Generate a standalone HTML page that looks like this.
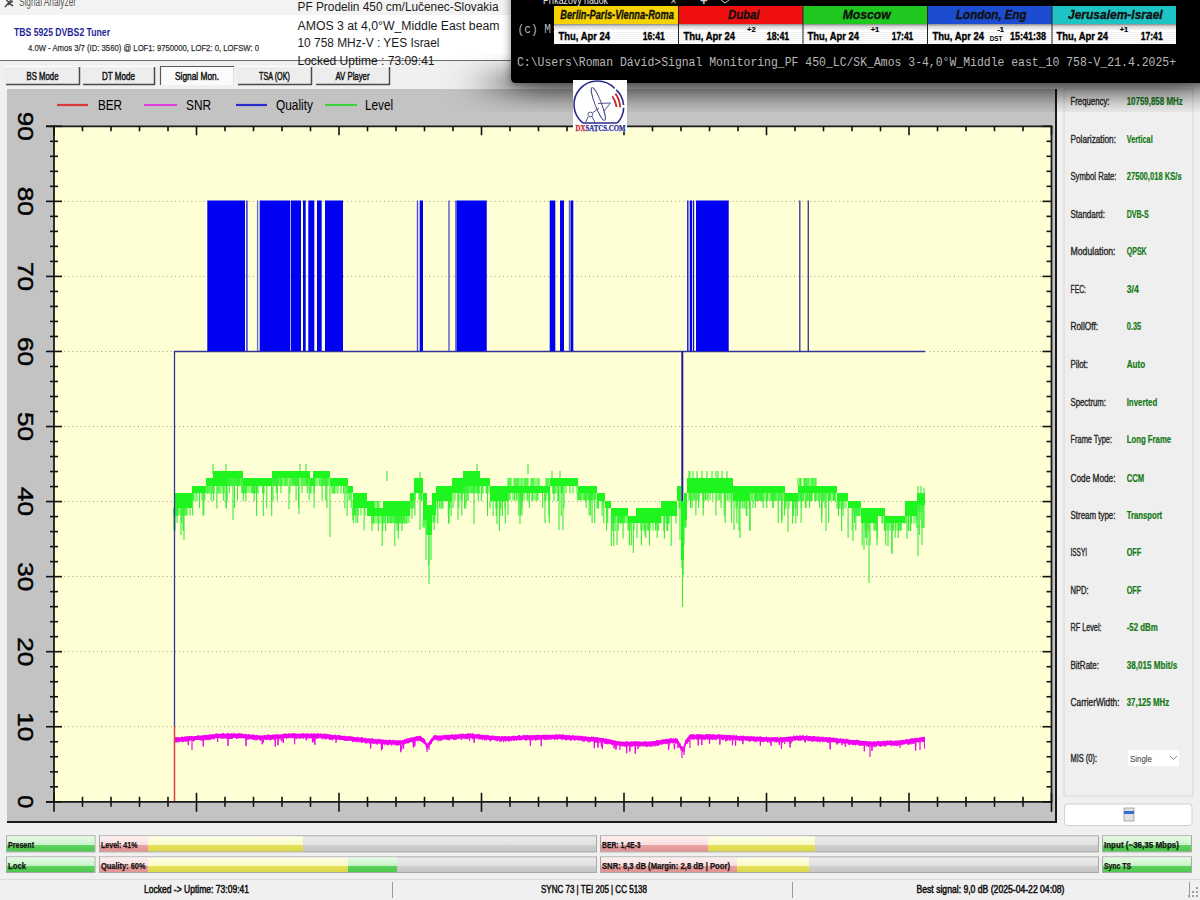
<!DOCTYPE html><html><head><meta charset="utf-8"><style>html,body{margin:0;padding:0;width:1200px;height:900px;overflow:hidden;background:#f0f0f0;font-family:"Liberation Sans",sans-serif}svg{display:block}</style></head><body><svg width="1200" height="900" viewBox="0 0 1200 900"><defs>
<linearGradient id="gGreen" x1="0" y1="0" x2="0" y2="1">
 <stop offset="0" stop-color="#e6fbe6"/><stop offset="0.55" stop-color="#c9f3c9"/><stop offset="0.6" stop-color="#5fd25f"/><stop offset="1" stop-color="#4cc84c"/></linearGradient>
<linearGradient id="gPink" x1="0" y1="0" x2="0" y2="1">
 <stop offset="0" stop-color="#fdf0f0"/><stop offset="0.55" stop-color="#f9dede"/><stop offset="0.6" stop-color="#e9a3a3"/><stop offset="1" stop-color="#e39393"/></linearGradient>
<linearGradient id="gYel" x1="0" y1="0" x2="0" y2="1">
 <stop offset="0" stop-color="#fdfde6"/><stop offset="0.55" stop-color="#fbfbc8"/><stop offset="0.6" stop-color="#e6e15a"/><stop offset="1" stop-color="#dcd84c"/></linearGradient>
<linearGradient id="gGray" x1="0" y1="0" x2="0" y2="1">
 <stop offset="0" stop-color="#ececec"/><stop offset="0.55" stop-color="#e0e0e0"/><stop offset="0.6" stop-color="#cfcfcf"/><stop offset="1" stop-color="#c6c6c6"/></linearGradient>
<linearGradient id="gShadow" x1="0" y1="0" x2="0" y2="1">
 <stop offset="0" stop-color="#000" stop-opacity="0.55"/><stop offset="1" stop-color="#000" stop-opacity="0"/></linearGradient>
<linearGradient id="gShadowL" x1="1" y1="0" x2="0" y2="0">
 <stop offset="0" stop-color="#000" stop-opacity="0.25"/><stop offset="1" stop-color="#000" stop-opacity="0"/></linearGradient>
<linearGradient id="gClock" x1="0" y1="0" x2="0" y2="1">
 <stop offset="0" stop-color="#8a8a8a"/><stop offset="0.35" stop-color="#d8d8d8"/><stop offset="1" stop-color="#ffffff"/></linearGradient>
<linearGradient id="gTabSel" x1="0" y1="0" x2="0" y2="1">
 <stop offset="0" stop-color="#ffffff"/><stop offset="1" stop-color="#f4f4f4"/></linearGradient>
<filter id="blur12" x="-20%" y="-50%" width="140%" height="200%"><feGaussianBlur stdDeviation="10"/></filter>
<filter id="blurS" x="-30%" y="-60%" width="160%" height="220%"><feGaussianBlur stdDeviation="28 11"/></filter>
<filter id="blurA" x="-10%" y="-30%" width="120%" height="160%"><feGaussianBlur stdDeviation="5"/></filter>
<filter id="blur1"><feGaussianBlur stdDeviation="0.6"/></filter>
</defs>
<rect x="0" y="0" width="1200" height="900" fill="#f0f0f0" />
<rect x="0" y="0" width="1200" height="15" fill="#f3f3f3" />
<rect x="0" y="15" width="1200" height="45" fill="#ffffff" />
<line x1="0" y1="60.5" x2="1200" y2="60.5" stroke="#6e6e6e" stroke-width="1.2" />
<text x="19" y="6.3" font-family="Liberation Sans" font-size="12.5" font-weight="normal" font-style="normal" fill="#5a5a5a" text-anchor="start" textLength="57" lengthAdjust="spacingAndGlyphs" >Signal Analyzer</text>
<g stroke="#444" stroke-width="1.4" fill="none"><path d="M5 7 L12 -1 M6 -1 Q9 4 13 6 M8 5 L13 1"/></g>
<text x="14" y="36" font-family="Liberation Sans" font-size="11" font-weight="bold" font-style="normal" fill="#1f1f99" text-anchor="start" textLength="96" lengthAdjust="spacingAndGlyphs" >TBS 5925 DVBS2 Tuner</text>
<text x="28" y="51" font-family="Liberation Sans" font-size="9.5" font-weight="normal" font-style="normal" fill="#333" text-anchor="start" textLength="231" lengthAdjust="spacingAndGlyphs" stroke="#333" stroke-width="0.25" >4.0W - Amos 3/7 (ID: 3560) @ LOF1: 9750000, LOF2: 0, LOFSW: 0</text>
<rect x="5" y="66" width="75" height="19" fill="#ededed" />
<line x1="5" y1="66.5" x2="80" y2="66.5" stroke="#ffffff" stroke-width="1" />
<line x1="6" y1="84.5" x2="80" y2="84.5" stroke="#4a4a4a" stroke-width="1.5" />
<line x1="79.5" y1="67" x2="79.5" y2="85" stroke="#4a4a4a" stroke-width="1.5" />
<text x="42.5" y="79.5" font-family="Liberation Sans" font-size="10.5" font-weight="normal" font-style="normal" fill="#111" text-anchor="middle" textLength="32" lengthAdjust="spacingAndGlyphs" stroke="#111" stroke-width="0.45" >BS Mode</text>
<rect x="82" y="66" width="73" height="19" fill="#ededed" />
<line x1="82" y1="66.5" x2="155" y2="66.5" stroke="#ffffff" stroke-width="1" />
<line x1="83" y1="84.5" x2="155" y2="84.5" stroke="#4a4a4a" stroke-width="1.5" />
<line x1="154.5" y1="67" x2="154.5" y2="85" stroke="#4a4a4a" stroke-width="1.5" />
<text x="118.5" y="79.5" font-family="Liberation Sans" font-size="10.5" font-weight="normal" font-style="normal" fill="#111" text-anchor="middle" textLength="33" lengthAdjust="spacingAndGlyphs" stroke="#111" stroke-width="0.45" >DT Mode</text>
<rect x="160" y="66" width="74" height="19" fill="#fbfbfb" />
<line x1="160.5" y1="66" x2="160.5" y2="85" stroke="#5a5a5a" stroke-width="1.2" />
<line x1="160" y1="66.5" x2="234" y2="66.5" stroke="#5a5a5a" stroke-width="1.2" />
<line x1="233.5" y1="67" x2="233.5" y2="85" stroke="#e0e0e0" stroke-width="1" />
<text x="197.0" y="80" font-family="Liberation Sans" font-size="10.5" font-weight="normal" font-style="normal" fill="#111" text-anchor="middle" textLength="44" lengthAdjust="spacingAndGlyphs" stroke="#111" stroke-width="0.45" >Signal Mon.</text>
<rect x="237" y="66" width="75" height="19" fill="#ededed" />
<line x1="237" y1="66.5" x2="312" y2="66.5" stroke="#ffffff" stroke-width="1" />
<line x1="238" y1="84.5" x2="312" y2="84.5" stroke="#4a4a4a" stroke-width="1.5" />
<line x1="311.5" y1="67" x2="311.5" y2="85" stroke="#4a4a4a" stroke-width="1.5" />
<text x="274.5" y="79.5" font-family="Liberation Sans" font-size="10.5" font-weight="normal" font-style="normal" fill="#111" text-anchor="middle" textLength="31" lengthAdjust="spacingAndGlyphs" stroke="#111" stroke-width="0.45" >TSA (OK)</text>
<rect x="315" y="66" width="75" height="19" fill="#ededed" />
<line x1="315" y1="66.5" x2="390" y2="66.5" stroke="#ffffff" stroke-width="1" />
<line x1="316" y1="84.5" x2="390" y2="84.5" stroke="#4a4a4a" stroke-width="1.5" />
<line x1="389.5" y1="67" x2="389.5" y2="85" stroke="#4a4a4a" stroke-width="1.5" />
<text x="352.5" y="79.5" font-family="Liberation Sans" font-size="10.5" font-weight="normal" font-style="normal" fill="#111" text-anchor="middle" textLength="34" lengthAdjust="spacingAndGlyphs" stroke="#111" stroke-width="0.45" >AV Player</text>
<rect x="7" y="89" width="1050" height="734" fill="#c3c3c3" />
<line x1="1056" y1="89" x2="1056" y2="823" stroke="#1a1a1a" stroke-width="2" />
<line x1="7" y1="822" x2="1057" y2="822" stroke="#1a1a1a" stroke-width="2" />
<rect x="54" y="126.3" width="997.5" height="675.5" fill="#ffffd6" />
<line x1="56" y1="726.7444444444444" x2="1051.5" y2="726.7444444444444" stroke="#9c9c7c" stroke-width="1" stroke-dasharray="1 3.1"/>
<line x1="56" y1="651.6888888888889" x2="1051.5" y2="651.6888888888889" stroke="#9c9c7c" stroke-width="1" stroke-dasharray="1 3.1"/>
<line x1="56" y1="576.6333333333333" x2="1051.5" y2="576.6333333333333" stroke="#9c9c7c" stroke-width="1" stroke-dasharray="1 3.1"/>
<line x1="56" y1="501.5777777777777" x2="1051.5" y2="501.5777777777777" stroke="#9c9c7c" stroke-width="1" stroke-dasharray="1 3.1"/>
<line x1="56" y1="426.5222222222222" x2="1051.5" y2="426.5222222222222" stroke="#9c9c7c" stroke-width="1" stroke-dasharray="1 3.1"/>
<line x1="56" y1="351.46666666666664" x2="1051.5" y2="351.46666666666664" stroke="#9c9c7c" stroke-width="1" stroke-dasharray="1 3.1"/>
<line x1="56" y1="276.41111111111104" x2="1051.5" y2="276.41111111111104" stroke="#9c9c7c" stroke-width="1" stroke-dasharray="1 3.1"/>
<line x1="56" y1="201.3555555555555" x2="1051.5" y2="201.3555555555555" stroke="#9c9c7c" stroke-width="1" stroke-dasharray="1 3.1"/>
<line x1="54" y1="125.3" x2="54" y2="802.8" stroke="#1a1a1a" stroke-width="1.8" />
<line x1="46" y1="801.8" x2="1052.5" y2="801.8" stroke="#1a1a1a" stroke-width="1.8" />
<line x1="46" y1="126.3" x2="1052.5" y2="126.3" stroke="#1a1a1a" stroke-width="1.8" />
<line x1="1051.5" y1="126.3" x2="1051.5" y2="801.8" stroke="#1a1a1a" stroke-width="1.8" />
<line x1="46" y1="801.8" x2="62" y2="801.8" stroke="#111" stroke-width="1.6" />
<line x1="1042.5" y1="801.8" x2="1051.5" y2="801.8" stroke="#111" stroke-width="1.6" />
<line x1="50" y1="786.7888888888889" x2="58" y2="786.7888888888889" stroke="#111" stroke-width="1.6" />
<line x1="1046.5" y1="786.7888888888889" x2="1051.5" y2="786.7888888888889" stroke="#111" stroke-width="1.6" />
<line x1="50" y1="771.7777777777777" x2="58" y2="771.7777777777777" stroke="#111" stroke-width="1.6" />
<line x1="1046.5" y1="771.7777777777777" x2="1051.5" y2="771.7777777777777" stroke="#111" stroke-width="1.6" />
<line x1="50" y1="756.7666666666667" x2="58" y2="756.7666666666667" stroke="#111" stroke-width="1.6" />
<line x1="1046.5" y1="756.7666666666667" x2="1051.5" y2="756.7666666666667" stroke="#111" stroke-width="1.6" />
<line x1="50" y1="741.7555555555555" x2="58" y2="741.7555555555555" stroke="#111" stroke-width="1.6" />
<line x1="1046.5" y1="741.7555555555555" x2="1051.5" y2="741.7555555555555" stroke="#111" stroke-width="1.6" />
<line x1="46" y1="726.7444444444444" x2="62" y2="726.7444444444444" stroke="#111" stroke-width="1.6" />
<line x1="1042.5" y1="726.7444444444444" x2="1051.5" y2="726.7444444444444" stroke="#111" stroke-width="1.6" />
<line x1="50" y1="711.7333333333333" x2="58" y2="711.7333333333333" stroke="#111" stroke-width="1.6" />
<line x1="1046.5" y1="711.7333333333333" x2="1051.5" y2="711.7333333333333" stroke="#111" stroke-width="1.6" />
<line x1="50" y1="696.7222222222222" x2="58" y2="696.7222222222222" stroke="#111" stroke-width="1.6" />
<line x1="1046.5" y1="696.7222222222222" x2="1051.5" y2="696.7222222222222" stroke="#111" stroke-width="1.6" />
<line x1="50" y1="681.7111111111111" x2="58" y2="681.7111111111111" stroke="#111" stroke-width="1.6" />
<line x1="1046.5" y1="681.7111111111111" x2="1051.5" y2="681.7111111111111" stroke="#111" stroke-width="1.6" />
<line x1="50" y1="666.6999999999999" x2="58" y2="666.6999999999999" stroke="#111" stroke-width="1.6" />
<line x1="1046.5" y1="666.6999999999999" x2="1051.5" y2="666.6999999999999" stroke="#111" stroke-width="1.6" />
<line x1="46" y1="651.6888888888889" x2="62" y2="651.6888888888889" stroke="#111" stroke-width="1.6" />
<line x1="1042.5" y1="651.6888888888889" x2="1051.5" y2="651.6888888888889" stroke="#111" stroke-width="1.6" />
<line x1="50" y1="636.6777777777777" x2="58" y2="636.6777777777777" stroke="#111" stroke-width="1.6" />
<line x1="1046.5" y1="636.6777777777777" x2="1051.5" y2="636.6777777777777" stroke="#111" stroke-width="1.6" />
<line x1="50" y1="621.6666666666666" x2="58" y2="621.6666666666666" stroke="#111" stroke-width="1.6" />
<line x1="1046.5" y1="621.6666666666666" x2="1051.5" y2="621.6666666666666" stroke="#111" stroke-width="1.6" />
<line x1="50" y1="606.6555555555556" x2="58" y2="606.6555555555556" stroke="#111" stroke-width="1.6" />
<line x1="1046.5" y1="606.6555555555556" x2="1051.5" y2="606.6555555555556" stroke="#111" stroke-width="1.6" />
<line x1="50" y1="591.6444444444444" x2="58" y2="591.6444444444444" stroke="#111" stroke-width="1.6" />
<line x1="1046.5" y1="591.6444444444444" x2="1051.5" y2="591.6444444444444" stroke="#111" stroke-width="1.6" />
<line x1="46" y1="576.6333333333333" x2="62" y2="576.6333333333333" stroke="#111" stroke-width="1.6" />
<line x1="1042.5" y1="576.6333333333333" x2="1051.5" y2="576.6333333333333" stroke="#111" stroke-width="1.6" />
<line x1="50" y1="561.6222222222221" x2="58" y2="561.6222222222221" stroke="#111" stroke-width="1.6" />
<line x1="1046.5" y1="561.6222222222221" x2="1051.5" y2="561.6222222222221" stroke="#111" stroke-width="1.6" />
<line x1="50" y1="546.6111111111111" x2="58" y2="546.6111111111111" stroke="#111" stroke-width="1.6" />
<line x1="1046.5" y1="546.6111111111111" x2="1051.5" y2="546.6111111111111" stroke="#111" stroke-width="1.6" />
<line x1="50" y1="531.5999999999999" x2="58" y2="531.5999999999999" stroke="#111" stroke-width="1.6" />
<line x1="1046.5" y1="531.5999999999999" x2="1051.5" y2="531.5999999999999" stroke="#111" stroke-width="1.6" />
<line x1="50" y1="516.5888888888888" x2="58" y2="516.5888888888888" stroke="#111" stroke-width="1.6" />
<line x1="1046.5" y1="516.5888888888888" x2="1051.5" y2="516.5888888888888" stroke="#111" stroke-width="1.6" />
<line x1="46" y1="501.5777777777777" x2="62" y2="501.5777777777777" stroke="#111" stroke-width="1.6" />
<line x1="1042.5" y1="501.5777777777777" x2="1051.5" y2="501.5777777777777" stroke="#111" stroke-width="1.6" />
<line x1="50" y1="486.5666666666666" x2="58" y2="486.5666666666666" stroke="#111" stroke-width="1.6" />
<line x1="1046.5" y1="486.5666666666666" x2="1051.5" y2="486.5666666666666" stroke="#111" stroke-width="1.6" />
<line x1="50" y1="471.5555555555555" x2="58" y2="471.5555555555555" stroke="#111" stroke-width="1.6" />
<line x1="1046.5" y1="471.5555555555555" x2="1051.5" y2="471.5555555555555" stroke="#111" stroke-width="1.6" />
<line x1="50" y1="456.5444444444444" x2="58" y2="456.5444444444444" stroke="#111" stroke-width="1.6" />
<line x1="1046.5" y1="456.5444444444444" x2="1051.5" y2="456.5444444444444" stroke="#111" stroke-width="1.6" />
<line x1="50" y1="441.5333333333333" x2="58" y2="441.5333333333333" stroke="#111" stroke-width="1.6" />
<line x1="1046.5" y1="441.5333333333333" x2="1051.5" y2="441.5333333333333" stroke="#111" stroke-width="1.6" />
<line x1="46" y1="426.5222222222222" x2="62" y2="426.5222222222222" stroke="#111" stroke-width="1.6" />
<line x1="1042.5" y1="426.5222222222222" x2="1051.5" y2="426.5222222222222" stroke="#111" stroke-width="1.6" />
<line x1="50" y1="411.51111111111106" x2="58" y2="411.51111111111106" stroke="#111" stroke-width="1.6" />
<line x1="1046.5" y1="411.51111111111106" x2="1051.5" y2="411.51111111111106" stroke="#111" stroke-width="1.6" />
<line x1="50" y1="396.49999999999994" x2="58" y2="396.49999999999994" stroke="#111" stroke-width="1.6" />
<line x1="1046.5" y1="396.49999999999994" x2="1051.5" y2="396.49999999999994" stroke="#111" stroke-width="1.6" />
<line x1="50" y1="381.4888888888888" x2="58" y2="381.4888888888888" stroke="#111" stroke-width="1.6" />
<line x1="1046.5" y1="381.4888888888888" x2="1051.5" y2="381.4888888888888" stroke="#111" stroke-width="1.6" />
<line x1="50" y1="366.47777777777776" x2="58" y2="366.47777777777776" stroke="#111" stroke-width="1.6" />
<line x1="1046.5" y1="366.47777777777776" x2="1051.5" y2="366.47777777777776" stroke="#111" stroke-width="1.6" />
<line x1="46" y1="351.46666666666664" x2="62" y2="351.46666666666664" stroke="#111" stroke-width="1.6" />
<line x1="1042.5" y1="351.46666666666664" x2="1051.5" y2="351.46666666666664" stroke="#111" stroke-width="1.6" />
<line x1="50" y1="336.4555555555555" x2="58" y2="336.4555555555555" stroke="#111" stroke-width="1.6" />
<line x1="1046.5" y1="336.4555555555555" x2="1051.5" y2="336.4555555555555" stroke="#111" stroke-width="1.6" />
<line x1="50" y1="321.4444444444444" x2="58" y2="321.4444444444444" stroke="#111" stroke-width="1.6" />
<line x1="1046.5" y1="321.4444444444444" x2="1051.5" y2="321.4444444444444" stroke="#111" stroke-width="1.6" />
<line x1="50" y1="306.4333333333333" x2="58" y2="306.4333333333333" stroke="#111" stroke-width="1.6" />
<line x1="1046.5" y1="306.4333333333333" x2="1051.5" y2="306.4333333333333" stroke="#111" stroke-width="1.6" />
<line x1="50" y1="291.42222222222216" x2="58" y2="291.42222222222216" stroke="#111" stroke-width="1.6" />
<line x1="1046.5" y1="291.42222222222216" x2="1051.5" y2="291.42222222222216" stroke="#111" stroke-width="1.6" />
<line x1="46" y1="276.41111111111104" x2="62" y2="276.41111111111104" stroke="#111" stroke-width="1.6" />
<line x1="1042.5" y1="276.41111111111104" x2="1051.5" y2="276.41111111111104" stroke="#111" stroke-width="1.6" />
<line x1="50" y1="261.4" x2="58" y2="261.4" stroke="#111" stroke-width="1.6" />
<line x1="1046.5" y1="261.4" x2="1051.5" y2="261.4" stroke="#111" stroke-width="1.6" />
<line x1="50" y1="246.3888888888888" x2="58" y2="246.3888888888888" stroke="#111" stroke-width="1.6" />
<line x1="1046.5" y1="246.3888888888888" x2="1051.5" y2="246.3888888888888" stroke="#111" stroke-width="1.6" />
<line x1="50" y1="231.37777777777774" x2="58" y2="231.37777777777774" stroke="#111" stroke-width="1.6" />
<line x1="1046.5" y1="231.37777777777774" x2="1051.5" y2="231.37777777777774" stroke="#111" stroke-width="1.6" />
<line x1="50" y1="216.36666666666667" x2="58" y2="216.36666666666667" stroke="#111" stroke-width="1.6" />
<line x1="1046.5" y1="216.36666666666667" x2="1051.5" y2="216.36666666666667" stroke="#111" stroke-width="1.6" />
<line x1="46" y1="201.3555555555555" x2="62" y2="201.3555555555555" stroke="#111" stroke-width="1.6" />
<line x1="1042.5" y1="201.3555555555555" x2="1051.5" y2="201.3555555555555" stroke="#111" stroke-width="1.6" />
<line x1="50" y1="186.34444444444443" x2="58" y2="186.34444444444443" stroke="#111" stroke-width="1.6" />
<line x1="1046.5" y1="186.34444444444443" x2="1051.5" y2="186.34444444444443" stroke="#111" stroke-width="1.6" />
<line x1="50" y1="171.33333333333326" x2="58" y2="171.33333333333326" stroke="#111" stroke-width="1.6" />
<line x1="1046.5" y1="171.33333333333326" x2="1051.5" y2="171.33333333333326" stroke="#111" stroke-width="1.6" />
<line x1="50" y1="156.3222222222222" x2="58" y2="156.3222222222222" stroke="#111" stroke-width="1.6" />
<line x1="1046.5" y1="156.3222222222222" x2="1051.5" y2="156.3222222222222" stroke="#111" stroke-width="1.6" />
<line x1="50" y1="141.31111111111102" x2="58" y2="141.31111111111102" stroke="#111" stroke-width="1.6" />
<line x1="1046.5" y1="141.31111111111102" x2="1051.5" y2="141.31111111111102" stroke="#111" stroke-width="1.6" />
<line x1="46" y1="126.29999999999995" x2="62" y2="126.29999999999995" stroke="#111" stroke-width="1.6" />
<line x1="1042.5" y1="126.29999999999995" x2="1051.5" y2="126.29999999999995" stroke="#111" stroke-width="1.6" />
<line x1="54.0" y1="792.8" x2="54.0" y2="811.8" stroke="#111" stroke-width="1.6" />
<line x1="54.0" y1="126.3" x2="54.0" y2="135.3" stroke="#111" stroke-width="1.6" />
<line x1="82.5" y1="796.8" x2="82.5" y2="806.8" stroke="#111" stroke-width="1.6" />
<line x1="82.5" y1="126.3" x2="82.5" y2="131.3" stroke="#111" stroke-width="1.6" />
<line x1="111.0" y1="796.8" x2="111.0" y2="806.8" stroke="#111" stroke-width="1.6" />
<line x1="111.0" y1="126.3" x2="111.0" y2="131.3" stroke="#111" stroke-width="1.6" />
<line x1="139.5" y1="796.8" x2="139.5" y2="806.8" stroke="#111" stroke-width="1.6" />
<line x1="139.5" y1="126.3" x2="139.5" y2="131.3" stroke="#111" stroke-width="1.6" />
<line x1="168.0" y1="796.8" x2="168.0" y2="806.8" stroke="#111" stroke-width="1.6" />
<line x1="168.0" y1="126.3" x2="168.0" y2="131.3" stroke="#111" stroke-width="1.6" />
<line x1="196.5" y1="792.8" x2="196.5" y2="811.8" stroke="#111" stroke-width="1.6" />
<line x1="196.5" y1="126.3" x2="196.5" y2="135.3" stroke="#111" stroke-width="1.6" />
<line x1="225.0" y1="796.8" x2="225.0" y2="806.8" stroke="#111" stroke-width="1.6" />
<line x1="225.0" y1="126.3" x2="225.0" y2="131.3" stroke="#111" stroke-width="1.6" />
<line x1="253.5" y1="796.8" x2="253.5" y2="806.8" stroke="#111" stroke-width="1.6" />
<line x1="253.5" y1="126.3" x2="253.5" y2="131.3" stroke="#111" stroke-width="1.6" />
<line x1="282.0" y1="796.8" x2="282.0" y2="806.8" stroke="#111" stroke-width="1.6" />
<line x1="282.0" y1="126.3" x2="282.0" y2="131.3" stroke="#111" stroke-width="1.6" />
<line x1="310.5" y1="796.8" x2="310.5" y2="806.8" stroke="#111" stroke-width="1.6" />
<line x1="310.5" y1="126.3" x2="310.5" y2="131.3" stroke="#111" stroke-width="1.6" />
<line x1="339.0" y1="792.8" x2="339.0" y2="811.8" stroke="#111" stroke-width="1.6" />
<line x1="339.0" y1="126.3" x2="339.0" y2="135.3" stroke="#111" stroke-width="1.6" />
<line x1="367.5" y1="796.8" x2="367.5" y2="806.8" stroke="#111" stroke-width="1.6" />
<line x1="367.5" y1="126.3" x2="367.5" y2="131.3" stroke="#111" stroke-width="1.6" />
<line x1="396.0" y1="796.8" x2="396.0" y2="806.8" stroke="#111" stroke-width="1.6" />
<line x1="396.0" y1="126.3" x2="396.0" y2="131.3" stroke="#111" stroke-width="1.6" />
<line x1="424.5" y1="796.8" x2="424.5" y2="806.8" stroke="#111" stroke-width="1.6" />
<line x1="424.5" y1="126.3" x2="424.5" y2="131.3" stroke="#111" stroke-width="1.6" />
<line x1="453.0" y1="796.8" x2="453.0" y2="806.8" stroke="#111" stroke-width="1.6" />
<line x1="453.0" y1="126.3" x2="453.0" y2="131.3" stroke="#111" stroke-width="1.6" />
<line x1="481.5" y1="792.8" x2="481.5" y2="811.8" stroke="#111" stroke-width="1.6" />
<line x1="481.5" y1="126.3" x2="481.5" y2="135.3" stroke="#111" stroke-width="1.6" />
<line x1="510.0" y1="796.8" x2="510.0" y2="806.8" stroke="#111" stroke-width="1.6" />
<line x1="510.0" y1="126.3" x2="510.0" y2="131.3" stroke="#111" stroke-width="1.6" />
<line x1="538.5" y1="796.8" x2="538.5" y2="806.8" stroke="#111" stroke-width="1.6" />
<line x1="538.5" y1="126.3" x2="538.5" y2="131.3" stroke="#111" stroke-width="1.6" />
<line x1="567.0" y1="796.8" x2="567.0" y2="806.8" stroke="#111" stroke-width="1.6" />
<line x1="567.0" y1="126.3" x2="567.0" y2="131.3" stroke="#111" stroke-width="1.6" />
<line x1="595.5" y1="796.8" x2="595.5" y2="806.8" stroke="#111" stroke-width="1.6" />
<line x1="595.5" y1="126.3" x2="595.5" y2="131.3" stroke="#111" stroke-width="1.6" />
<line x1="624.0" y1="792.8" x2="624.0" y2="811.8" stroke="#111" stroke-width="1.6" />
<line x1="624.0" y1="126.3" x2="624.0" y2="135.3" stroke="#111" stroke-width="1.6" />
<line x1="652.5" y1="796.8" x2="652.5" y2="806.8" stroke="#111" stroke-width="1.6" />
<line x1="652.5" y1="126.3" x2="652.5" y2="131.3" stroke="#111" stroke-width="1.6" />
<line x1="681.0" y1="796.8" x2="681.0" y2="806.8" stroke="#111" stroke-width="1.6" />
<line x1="681.0" y1="126.3" x2="681.0" y2="131.3" stroke="#111" stroke-width="1.6" />
<line x1="709.5" y1="796.8" x2="709.5" y2="806.8" stroke="#111" stroke-width="1.6" />
<line x1="709.5" y1="126.3" x2="709.5" y2="131.3" stroke="#111" stroke-width="1.6" />
<line x1="738.0" y1="796.8" x2="738.0" y2="806.8" stroke="#111" stroke-width="1.6" />
<line x1="738.0" y1="126.3" x2="738.0" y2="131.3" stroke="#111" stroke-width="1.6" />
<line x1="766.5" y1="792.8" x2="766.5" y2="811.8" stroke="#111" stroke-width="1.6" />
<line x1="766.5" y1="126.3" x2="766.5" y2="135.3" stroke="#111" stroke-width="1.6" />
<line x1="795.0" y1="796.8" x2="795.0" y2="806.8" stroke="#111" stroke-width="1.6" />
<line x1="795.0" y1="126.3" x2="795.0" y2="131.3" stroke="#111" stroke-width="1.6" />
<line x1="823.5" y1="796.8" x2="823.5" y2="806.8" stroke="#111" stroke-width="1.6" />
<line x1="823.5" y1="126.3" x2="823.5" y2="131.3" stroke="#111" stroke-width="1.6" />
<line x1="852.0" y1="796.8" x2="852.0" y2="806.8" stroke="#111" stroke-width="1.6" />
<line x1="852.0" y1="126.3" x2="852.0" y2="131.3" stroke="#111" stroke-width="1.6" />
<line x1="880.5" y1="796.8" x2="880.5" y2="806.8" stroke="#111" stroke-width="1.6" />
<line x1="880.5" y1="126.3" x2="880.5" y2="131.3" stroke="#111" stroke-width="1.6" />
<line x1="909.0" y1="792.8" x2="909.0" y2="811.8" stroke="#111" stroke-width="1.6" />
<line x1="909.0" y1="126.3" x2="909.0" y2="135.3" stroke="#111" stroke-width="1.6" />
<line x1="937.5" y1="796.8" x2="937.5" y2="806.8" stroke="#111" stroke-width="1.6" />
<line x1="937.5" y1="126.3" x2="937.5" y2="131.3" stroke="#111" stroke-width="1.6" />
<line x1="966.0" y1="796.8" x2="966.0" y2="806.8" stroke="#111" stroke-width="1.6" />
<line x1="966.0" y1="126.3" x2="966.0" y2="131.3" stroke="#111" stroke-width="1.6" />
<line x1="994.5" y1="796.8" x2="994.5" y2="806.8" stroke="#111" stroke-width="1.6" />
<line x1="994.5" y1="126.3" x2="994.5" y2="131.3" stroke="#111" stroke-width="1.6" />
<line x1="1023.0" y1="796.8" x2="1023.0" y2="806.8" stroke="#111" stroke-width="1.6" />
<line x1="1023.0" y1="126.3" x2="1023.0" y2="131.3" stroke="#111" stroke-width="1.6" />
<line x1="1051.5" y1="792.8" x2="1051.5" y2="811.8" stroke="#111" stroke-width="1.6" />
<line x1="1051.5" y1="126.3" x2="1051.5" y2="135.3" stroke="#111" stroke-width="1.6" />
<text transform="translate(18,801.8) rotate(90)" x="0" y="0" font-family="Liberation Sans" font-size="22" fill="#000" stroke="#000" stroke-width="0.45" text-anchor="middle" textLength="13" lengthAdjust="spacingAndGlyphs" dy="0">0</text>
<text transform="translate(18,726.7444444444444) rotate(90)" x="0" y="0" font-family="Liberation Sans" font-size="22" fill="#000" stroke="#000" stroke-width="0.45" text-anchor="middle" textLength="29" lengthAdjust="spacingAndGlyphs" dy="0">10</text>
<text transform="translate(18,651.6888888888889) rotate(90)" x="0" y="0" font-family="Liberation Sans" font-size="22" fill="#000" stroke="#000" stroke-width="0.45" text-anchor="middle" textLength="29" lengthAdjust="spacingAndGlyphs" dy="0">20</text>
<text transform="translate(18,576.6333333333333) rotate(90)" x="0" y="0" font-family="Liberation Sans" font-size="22" fill="#000" stroke="#000" stroke-width="0.45" text-anchor="middle" textLength="29" lengthAdjust="spacingAndGlyphs" dy="0">30</text>
<text transform="translate(18,501.5777777777777) rotate(90)" x="0" y="0" font-family="Liberation Sans" font-size="22" fill="#000" stroke="#000" stroke-width="0.45" text-anchor="middle" textLength="29" lengthAdjust="spacingAndGlyphs" dy="0">40</text>
<text transform="translate(18,426.5222222222222) rotate(90)" x="0" y="0" font-family="Liberation Sans" font-size="22" fill="#000" stroke="#000" stroke-width="0.45" text-anchor="middle" textLength="29" lengthAdjust="spacingAndGlyphs" dy="0">50</text>
<text transform="translate(18,351.46666666666664) rotate(90)" x="0" y="0" font-family="Liberation Sans" font-size="22" fill="#000" stroke="#000" stroke-width="0.45" text-anchor="middle" textLength="29" lengthAdjust="spacingAndGlyphs" dy="0">60</text>
<text transform="translate(18,276.41111111111104) rotate(90)" x="0" y="0" font-family="Liberation Sans" font-size="22" fill="#000" stroke="#000" stroke-width="0.45" text-anchor="middle" textLength="29" lengthAdjust="spacingAndGlyphs" dy="0">70</text>
<text transform="translate(18,201.3555555555555) rotate(90)" x="0" y="0" font-family="Liberation Sans" font-size="22" fill="#000" stroke="#000" stroke-width="0.45" text-anchor="middle" textLength="29" lengthAdjust="spacingAndGlyphs" dy="0">80</text>
<text transform="translate(18,126.29999999999995) rotate(90)" x="0" y="0" font-family="Liberation Sans" font-size="22" fill="#000" stroke="#000" stroke-width="0.45" text-anchor="middle" textLength="29" lengthAdjust="spacingAndGlyphs" dy="0">90</text>
<line x1="57" y1="105" x2="88" y2="105" stroke="#d83a3a" stroke-width="2.2" />
<text x="98" y="110" font-family="Liberation Sans" font-size="14.5" font-weight="normal" font-style="normal" fill="#000" text-anchor="start" textLength="24" lengthAdjust="spacingAndGlyphs" >BER</text>
<line x1="144" y1="105" x2="177" y2="105" stroke="#e040e0" stroke-width="2.2" />
<text x="186" y="110" font-family="Liberation Sans" font-size="14.5" font-weight="normal" font-style="normal" fill="#000" text-anchor="start" textLength="25" lengthAdjust="spacingAndGlyphs" >SNR</text>
<line x1="236" y1="105" x2="267" y2="105" stroke="#2a2ad0" stroke-width="2.2" />
<text x="276" y="110" font-family="Liberation Sans" font-size="14.5" font-weight="normal" font-style="normal" fill="#000" text-anchor="start" textLength="37" lengthAdjust="spacingAndGlyphs" >Quality</text>
<line x1="325" y1="105" x2="357" y2="105" stroke="#3cd23c" stroke-width="2.2" />
<text x="365" y="110" font-family="Liberation Sans" font-size="14.5" font-weight="normal" font-style="normal" fill="#000" text-anchor="start" textLength="28" lengthAdjust="spacingAndGlyphs" >Level</text>
<rect x="174" y="493" width="18" height="15" fill="#1ef51e" />
<rect x="192" y="486" width="14" height="7" fill="#1ef51e" />
<rect x="206" y="478" width="7" height="8" fill="#1ef51e" />
<rect x="213" y="471" width="15" height="15" fill="#1ef51e" />
<rect x="228" y="471" width="15" height="7" fill="#1ef51e" />
<rect x="243" y="478" width="15" height="8" fill="#1ef51e" />
<rect x="258" y="478" width="14" height="8" fill="#1ef51e" />
<rect x="272" y="471" width="38" height="7" fill="#1ef51e" />
<rect x="310" y="478" width="3" height="8" fill="#1ef51e" />
<rect x="313" y="471" width="17" height="7" fill="#1ef51e" />
<rect x="330" y="478" width="18" height="8" fill="#1ef51e" />
<rect x="348" y="486" width="5" height="7" fill="#1ef51e" />
<rect x="353" y="493" width="14" height="15" fill="#1ef51e" />
<rect x="367" y="501" width="7" height="15" fill="#1ef51e" />
<rect x="374" y="508" width="9" height="8" fill="#1ef51e" />
<rect x="383" y="501" width="27" height="15" fill="#1ef51e" />
<rect x="410" y="493" width="4" height="8" fill="#1ef51e" />
<rect x="414" y="478" width="9" height="15" fill="#1ef51e" />
<rect x="423" y="493" width="4" height="27" fill="#1ef51e" />
<rect x="427" y="505" width="5" height="30" fill="#1ef51e" />
<rect x="432" y="493" width="4" height="22" fill="#1ef51e" />
<rect x="436" y="486" width="16" height="15" fill="#1ef51e" />
<rect x="452" y="478" width="11" height="15" fill="#1ef51e" />
<rect x="463" y="471" width="17" height="15" fill="#1ef51e" />
<rect x="480" y="478" width="10" height="8" fill="#1ef51e" />
<rect x="490" y="486" width="18" height="15" fill="#1ef51e" />
<rect x="508" y="486" width="42" height="7" fill="#1ef51e" />
<rect x="550" y="478" width="28" height="8" fill="#1ef51e" />
<rect x="578" y="486" width="19" height="7" fill="#1ef51e" />
<rect x="597" y="493" width="8" height="8" fill="#1ef51e" />
<rect x="605" y="501" width="6" height="7" fill="#1ef51e" />
<rect x="611" y="508" width="17" height="8" fill="#1ef51e" />
<rect x="628" y="516" width="8" height="7" fill="#1ef51e" />
<rect x="636" y="508" width="25" height="15" fill="#1ef51e" />
<rect x="661" y="501" width="16" height="15" fill="#1ef51e" />
<rect x="677" y="486" width="4" height="15" fill="#1ef51e" />
<rect x="681" y="501" width="3" height="59" fill="#1ef51e" />
<rect x="684" y="493" width="3" height="27" fill="#1ef51e" />
<rect x="687" y="478" width="46" height="15" fill="#1ef51e" />
<rect x="733" y="486" width="17" height="15" fill="#1ef51e" />
<rect x="750" y="486" width="35" height="7" fill="#1ef51e" />
<rect x="785" y="493" width="13" height="8" fill="#1ef51e" />
<rect x="798" y="486" width="39" height="7" fill="#1ef51e" />
<rect x="837" y="493" width="11" height="8" fill="#1ef51e" />
<rect x="848" y="501" width="13" height="7" fill="#1ef51e" />
<rect x="861" y="508" width="16" height="15" fill="#1ef51e" />
<rect x="877" y="508" width="8" height="8" fill="#1ef51e" />
<rect x="885" y="516" width="20" height="7" fill="#1ef51e" />
<rect x="905" y="501" width="12" height="15" fill="#1ef51e" />
<rect x="917" y="493" width="8" height="12" fill="#1ef51e" />
<g stroke="#1ef51e" stroke-width="1"><line x1="228.0" y1="478" x2="228.0" y2="486"/><line x1="229.0" y1="478" x2="229.0" y2="486"/><line x1="230.0" y1="478" x2="230.0" y2="486"/><line x1="231.0" y1="478" x2="231.0" y2="486"/><line x1="232.0" y1="478" x2="232.0" y2="486"/><line x1="233.0" y1="478" x2="233.0" y2="486"/><line x1="234.0" y1="478" x2="234.0" y2="486"/><line x1="235.0" y1="478" x2="235.0" y2="486"/><line x1="236.0" y1="478" x2="236.0" y2="486"/><line x1="237.0" y1="478" x2="237.0" y2="486"/><line x1="238.0" y1="478" x2="238.0" y2="486"/><line x1="239.0" y1="478" x2="239.0" y2="486"/><line x1="240.0" y1="478" x2="240.0" y2="486"/><line x1="242.0" y1="478" x2="242.0" y2="486"/><line x1="243.0" y1="486" x2="243.0" y2="493"/><line x1="244.0" y1="486" x2="244.0" y2="493"/><line x1="246.0" y1="486" x2="246.0" y2="493"/><line x1="247.0" y1="486" x2="247.0" y2="493"/><line x1="249.0" y1="486" x2="249.0" y2="493"/><line x1="251.0" y1="486" x2="251.0" y2="493"/><line x1="252.0" y1="486" x2="252.0" y2="493"/><line x1="253.0" y1="486" x2="253.0" y2="493"/><line x1="254.0" y1="486" x2="254.0" y2="493"/><line x1="256.0" y1="486" x2="256.0" y2="493"/><line x1="257.0" y1="486" x2="257.0" y2="493"/><line x1="272.0" y1="478" x2="272.0" y2="486"/><line x1="273.0" y1="478" x2="273.0" y2="486"/><line x1="274.0" y1="478" x2="274.0" y2="486"/><line x1="275.0" y1="478" x2="275.0" y2="486"/><line x1="276.0" y1="478" x2="276.0" y2="486"/><line x1="277.0" y1="478" x2="277.0" y2="486"/><line x1="278.0" y1="478" x2="278.0" y2="486"/><line x1="279.0" y1="478" x2="279.0" y2="486"/><line x1="280.0" y1="478" x2="280.0" y2="486"/><line x1="281.0" y1="478" x2="281.0" y2="486"/><line x1="282.0" y1="478" x2="282.0" y2="486"/><line x1="283.0" y1="478" x2="283.0" y2="486"/><line x1="285.0" y1="478" x2="285.0" y2="486"/><line x1="286.0" y1="478" x2="286.0" y2="486"/><line x1="287.0" y1="478" x2="287.0" y2="486"/><line x1="288.0" y1="478" x2="288.0" y2="486"/><line x1="291.0" y1="478" x2="291.0" y2="486"/><line x1="293.0" y1="478" x2="293.0" y2="486"/><line x1="294.0" y1="478" x2="294.0" y2="486"/><line x1="296.0" y1="478" x2="296.0" y2="486"/><line x1="297.0" y1="478" x2="297.0" y2="486"/><line x1="298.0" y1="478" x2="298.0" y2="486"/><line x1="299.0" y1="478" x2="299.0" y2="486"/><line x1="301.0" y1="478" x2="301.0" y2="486"/><line x1="303.0" y1="478" x2="303.0" y2="486"/><line x1="304.0" y1="478" x2="304.0" y2="486"/><line x1="305.0" y1="478" x2="305.0" y2="486"/><line x1="306.0" y1="478" x2="306.0" y2="486"/><line x1="307.0" y1="478" x2="307.0" y2="486"/><line x1="313.0" y1="478" x2="313.0" y2="486"/><line x1="314.0" y1="478" x2="314.0" y2="486"/><line x1="315.0" y1="478" x2="315.0" y2="486"/><line x1="317.0" y1="478" x2="317.0" y2="486"/><line x1="320.0" y1="478" x2="320.0" y2="486"/><line x1="321.0" y1="478" x2="321.0" y2="486"/><line x1="322.0" y1="478" x2="322.0" y2="486"/><line x1="323.0" y1="478" x2="323.0" y2="486"/><line x1="324.0" y1="478" x2="324.0" y2="486"/><line x1="325.0" y1="478" x2="325.0" y2="486"/><line x1="326.0" y1="478" x2="326.0" y2="486"/><line x1="327.0" y1="478" x2="327.0" y2="486"/><line x1="329.0" y1="478" x2="329.0" y2="486"/><line x1="374.0" y1="501" x2="374.0" y2="508"/><line x1="375.0" y1="501" x2="375.0" y2="508"/><line x1="377.0" y1="501" x2="377.0" y2="508"/><line x1="378.0" y1="501" x2="378.0" y2="508"/><line x1="379.0" y1="501" x2="379.0" y2="508"/><line x1="383.0" y1="516" x2="383.0" y2="523"/><line x1="384.0" y1="516" x2="384.0" y2="523"/><line x1="385.0" y1="516" x2="385.0" y2="523"/><line x1="388.0" y1="516" x2="388.0" y2="523"/><line x1="389.0" y1="516" x2="389.0" y2="523"/><line x1="390.0" y1="516" x2="390.0" y2="523"/><line x1="391.0" y1="516" x2="391.0" y2="523"/><line x1="392.0" y1="516" x2="392.0" y2="523"/><line x1="393.0" y1="516" x2="393.0" y2="523"/><line x1="394.0" y1="516" x2="394.0" y2="523"/><line x1="395.0" y1="516" x2="395.0" y2="523"/><line x1="396.0" y1="516" x2="396.0" y2="523"/><line x1="397.0" y1="516" x2="397.0" y2="523"/><line x1="398.0" y1="516" x2="398.0" y2="523"/><line x1="400.0" y1="516" x2="400.0" y2="523"/><line x1="401.0" y1="516" x2="401.0" y2="523"/><line x1="402.0" y1="516" x2="402.0" y2="523"/><line x1="403.0" y1="516" x2="403.0" y2="523"/><line x1="404.0" y1="516" x2="404.0" y2="523"/><line x1="409.0" y1="516" x2="409.0" y2="523"/><line x1="463.0" y1="486" x2="463.0" y2="493"/><line x1="464.0" y1="486" x2="464.0" y2="493"/><line x1="465.0" y1="486" x2="465.0" y2="493"/><line x1="466.0" y1="486" x2="466.0" y2="493"/><line x1="467.0" y1="486" x2="467.0" y2="493"/><line x1="468.0" y1="486" x2="468.0" y2="493"/><line x1="469.0" y1="486" x2="469.0" y2="493"/><line x1="470.0" y1="486" x2="470.0" y2="493"/><line x1="471.0" y1="486" x2="471.0" y2="493"/><line x1="472.0" y1="486" x2="472.0" y2="493"/><line x1="473.0" y1="486" x2="473.0" y2="493"/><line x1="474.0" y1="486" x2="474.0" y2="493"/><line x1="475.0" y1="486" x2="475.0" y2="493"/><line x1="476.0" y1="486" x2="476.0" y2="493"/><line x1="478.0" y1="486" x2="478.0" y2="493"/><line x1="479.0" y1="486" x2="479.0" y2="493"/><line x1="508.0" y1="478" x2="508.0" y2="486"/><line x1="509.0" y1="478" x2="509.0" y2="486"/><line x1="510.0" y1="478" x2="510.0" y2="486"/><line x1="511.0" y1="478" x2="511.0" y2="486"/><line x1="514.0" y1="478" x2="514.0" y2="486"/><line x1="515.0" y1="478" x2="515.0" y2="486"/><line x1="516.0" y1="478" x2="516.0" y2="486"/><line x1="517.0" y1="478" x2="517.0" y2="486"/><line x1="518.0" y1="478" x2="518.0" y2="486"/><line x1="519.0" y1="478" x2="519.0" y2="486"/><line x1="521.0" y1="478" x2="521.0" y2="486"/><line x1="522.0" y1="478" x2="522.0" y2="486"/><line x1="524.0" y1="478" x2="524.0" y2="486"/><line x1="525.0" y1="478" x2="525.0" y2="486"/><line x1="526.0" y1="478" x2="526.0" y2="486"/><line x1="527.0" y1="478" x2="527.0" y2="486"/><line x1="528.0" y1="478" x2="528.0" y2="486"/><line x1="531.0" y1="478" x2="531.0" y2="486"/><line x1="532.0" y1="478" x2="532.0" y2="486"/><line x1="533.0" y1="478" x2="533.0" y2="486"/><line x1="534.0" y1="478" x2="534.0" y2="486"/><line x1="536.0" y1="478" x2="536.0" y2="486"/><line x1="538.0" y1="478" x2="538.0" y2="486"/><line x1="539.0" y1="478" x2="539.0" y2="486"/><line x1="546.0" y1="478" x2="546.0" y2="486"/><line x1="547.0" y1="478" x2="547.0" y2="486"/><line x1="548.0" y1="478" x2="548.0" y2="486"/><line x1="549.0" y1="478" x2="549.0" y2="486"/><line x1="798.0" y1="493" x2="798.0" y2="501"/><line x1="799.0" y1="493" x2="799.0" y2="501"/><line x1="800.0" y1="493" x2="800.0" y2="501"/><line x1="801.0" y1="493" x2="801.0" y2="501"/><line x1="803.0" y1="493" x2="803.0" y2="501"/><line x1="807.0" y1="493" x2="807.0" y2="501"/><line x1="808.0" y1="493" x2="808.0" y2="501"/><line x1="809.0" y1="493" x2="809.0" y2="501"/><line x1="810.0" y1="493" x2="810.0" y2="501"/><line x1="811.0" y1="493" x2="811.0" y2="501"/><line x1="812.0" y1="493" x2="812.0" y2="501"/><line x1="815.0" y1="493" x2="815.0" y2="501"/><line x1="816.0" y1="493" x2="816.0" y2="501"/><line x1="818.0" y1="493" x2="818.0" y2="501"/><line x1="819.0" y1="493" x2="819.0" y2="501"/><line x1="823.0" y1="493" x2="823.0" y2="501"/><line x1="824.0" y1="493" x2="824.0" y2="501"/><line x1="826.0" y1="493" x2="826.0" y2="501"/><line x1="829.0" y1="493" x2="829.0" y2="501"/><line x1="830.0" y1="493" x2="830.0" y2="501"/><line x1="833.0" y1="493" x2="833.0" y2="501"/><line x1="834.0" y1="493" x2="834.0" y2="501"/><line x1="835.0" y1="493" x2="835.0" y2="501"/><line x1="853.0" y1="508" x2="853.0" y2="516"/><line x1="856.0" y1="508" x2="856.0" y2="516"/><line x1="857.0" y1="508" x2="857.0" y2="516"/><line x1="858.0" y1="508" x2="858.0" y2="516"/><line x1="859.0" y1="508" x2="859.0" y2="516"/><line x1="860.0" y1="508" x2="860.0" y2="516"/><line x1="612.0" y1="516" x2="612.0" y2="523"/><line x1="613.0" y1="516" x2="613.0" y2="523"/><line x1="615.0" y1="516" x2="615.0" y2="523"/><line x1="618.0" y1="516" x2="618.0" y2="523"/><line x1="619.0" y1="516" x2="619.0" y2="523"/><line x1="620.0" y1="516" x2="620.0" y2="523"/><line x1="621.0" y1="516" x2="621.0" y2="523"/><line x1="622.0" y1="516" x2="622.0" y2="523"/><line x1="623.0" y1="516" x2="623.0" y2="523"/><line x1="624.0" y1="516" x2="624.0" y2="523"/><line x1="625.0" y1="516" x2="625.0" y2="523"/><line x1="627.0" y1="516" x2="627.0" y2="523"/><line x1="628.0" y1="516" x2="628.0" y2="523"/><line x1="629.0" y1="516" x2="629.0" y2="523"/><line x1="631.0" y1="516" x2="631.0" y2="523"/><line x1="633.0" y1="516" x2="633.0" y2="523"/><line x1="634.0" y1="516" x2="634.0" y2="523"/><line x1="635.0" y1="516" x2="635.0" y2="523"/><line x1="636.0" y1="516" x2="636.0" y2="523"/><line x1="637.0" y1="516" x2="637.0" y2="523"/><line x1="638.0" y1="516" x2="638.0" y2="523"/><line x1="639.0" y1="516" x2="639.0" y2="523"/><line x1="641.0" y1="516" x2="641.0" y2="523"/><line x1="642.0" y1="516" x2="642.0" y2="523"/><line x1="644.0" y1="516" x2="644.0" y2="523"/><line x1="645.0" y1="516" x2="645.0" y2="523"/><line x1="646.0" y1="516" x2="646.0" y2="523"/><line x1="647.0" y1="516" x2="647.0" y2="523"/><line x1="649.0" y1="516" x2="649.0" y2="523"/><line x1="650.0" y1="516" x2="650.0" y2="523"/><line x1="651.0" y1="516" x2="651.0" y2="523"/><line x1="652.0" y1="516" x2="652.0" y2="523"/><line x1="751.0" y1="493" x2="751.0" y2="501"/><line x1="752.0" y1="493" x2="752.0" y2="501"/><line x1="755.0" y1="493" x2="755.0" y2="501"/><line x1="756.0" y1="493" x2="756.0" y2="501"/><line x1="757.0" y1="493" x2="757.0" y2="501"/><line x1="758.0" y1="493" x2="758.0" y2="501"/><line x1="759.0" y1="493" x2="759.0" y2="501"/><line x1="760.0" y1="493" x2="760.0" y2="501"/><line x1="761.0" y1="493" x2="761.0" y2="501"/><line x1="762.0" y1="493" x2="762.0" y2="501"/><line x1="764.0" y1="493" x2="764.0" y2="501"/><line x1="767.0" y1="493" x2="767.0" y2="501"/><line x1="768.0" y1="493" x2="768.0" y2="501"/><line x1="771.0" y1="493" x2="771.0" y2="501"/><line x1="772.0" y1="493" x2="772.0" y2="501"/><line x1="773.0" y1="493" x2="773.0" y2="501"/><line x1="774.0" y1="493" x2="774.0" y2="501"/><line x1="775.0" y1="493" x2="775.0" y2="501"/><line x1="776.0" y1="493" x2="776.0" y2="501"/><line x1="777.0" y1="493" x2="777.0" y2="501"/><line x1="780.0" y1="493" x2="780.0" y2="501"/><line x1="782.0" y1="493" x2="782.0" y2="501"/><line x1="783.0" y1="493" x2="783.0" y2="501"/><line x1="798.0" y1="478" x2="798.0" y2="486"/><line x1="800.0" y1="478" x2="800.0" y2="486"/><line x1="801.0" y1="478" x2="801.0" y2="486"/><line x1="804.0" y1="478" x2="804.0" y2="486"/><line x1="805.0" y1="478" x2="805.0" y2="486"/><line x1="806.0" y1="478" x2="806.0" y2="486"/><line x1="807.0" y1="478" x2="807.0" y2="486"/><line x1="808.0" y1="478" x2="808.0" y2="486"/><line x1="809.0" y1="478" x2="809.0" y2="486"/><line x1="811.0" y1="478" x2="811.0" y2="486"/><line x1="812.0" y1="478" x2="812.0" y2="486"/><line x1="813.0" y1="478" x2="813.0" y2="486"/><line x1="814.0" y1="478" x2="814.0" y2="486"/><line x1="815.0" y1="478" x2="815.0" y2="486"/><line x1="816.0" y1="478" x2="816.0" y2="486"/><line x1="917.0" y1="505" x2="917.0" y2="528"/><line x1="918.0" y1="505" x2="918.0" y2="528"/><line x1="922.0" y1="505" x2="922.0" y2="528"/><line x1="923.0" y1="505" x2="923.0" y2="528"/><line x1="924.0" y1="505" x2="924.0" y2="528"/><line x1="175.0" y1="508" x2="175.0" y2="516"/><line x1="176.0" y1="508" x2="176.0" y2="516"/><line x1="177.0" y1="508" x2="177.0" y2="516"/><line x1="192.0" y1="493" x2="192.0" y2="501"/><line x1="193.0" y1="493" x2="193.0" y2="501"/><line x1="195.0" y1="493" x2="195.0" y2="501"/><line x1="197.0" y1="493" x2="197.0" y2="501"/><line x1="578.0" y1="493" x2="578.0" y2="500"/><line x1="579.0" y1="493" x2="579.0" y2="500"/><line x1="580.0" y1="493" x2="580.0" y2="500"/><line x1="581.0" y1="493" x2="581.0" y2="500"/><line x1="583.0" y1="493" x2="583.0" y2="500"/><line x1="585.0" y1="493" x2="585.0" y2="500"/><line x1="587.0" y1="493" x2="587.0" y2="500"/><line x1="589.0" y1="493" x2="589.0" y2="500"/><line x1="590.0" y1="493" x2="590.0" y2="500"/><line x1="591.0" y1="493" x2="591.0" y2="500"/><line x1="593.0" y1="493" x2="593.0" y2="500"/><line x1="594.0" y1="493" x2="594.0" y2="500"/><line x1="595.0" y1="493" x2="595.0" y2="500"/><line x1="596.0" y1="493" x2="596.0" y2="500"/><line x1="174.0" y1="508" x2="174.0" y2="515.5"/><line x1="175.0" y1="508" x2="175.0" y2="515.5"/><line x1="176.0" y1="508" x2="176.0" y2="515.5"/><line x1="177.0" y1="508" x2="177.0" y2="515.5"/><line x1="178.0" y1="508" x2="178.0" y2="515.5"/><line x1="179.0" y1="508" x2="179.0" y2="515.5"/><line x1="181.0" y1="508" x2="181.0" y2="515.5"/><line x1="183.0" y1="508" x2="183.0" y2="515.5"/><line x1="184.0" y1="508" x2="184.0" y2="515.5"/><line x1="185.0" y1="508" x2="185.0" y2="515.5"/><line x1="186.0" y1="508" x2="186.0" y2="515.5"/><line x1="187.0" y1="508" x2="187.0" y2="515.5"/><line x1="190.0" y1="508" x2="190.0" y2="515.5"/><line x1="193.0" y1="493" x2="193.0" y2="500.5"/><line x1="202.0" y1="493" x2="202.0" y2="500.5"/><line x1="207.0" y1="486" x2="207.0" y2="493.5"/><line x1="208.0" y1="486" x2="208.0" y2="493.5"/><line x1="209.0" y1="486" x2="209.0" y2="493.5"/><line x1="210.0" y1="486" x2="210.0" y2="493.5"/><line x1="212.0" y1="486" x2="212.0" y2="493.5"/><line x1="213.0" y1="486" x2="213.0" y2="493.5"/><line x1="214.0" y1="486" x2="214.0" y2="493.5"/><line x1="218.0" y1="486" x2="218.0" y2="493.5"/><line x1="219.0" y1="486" x2="219.0" y2="493.5"/><line x1="220.0" y1="486" x2="220.0" y2="493.5"/><line x1="222.0" y1="486" x2="222.0" y2="493.5"/><line x1="224.0" y1="486" x2="224.0" y2="493.5"/><line x1="228.0" y1="478" x2="228.0" y2="485.5"/><line x1="230.0" y1="478" x2="230.0" y2="485.5"/><line x1="232.0" y1="478" x2="232.0" y2="485.5"/><line x1="236.0" y1="478" x2="236.0" y2="485.5"/><line x1="238.0" y1="478" x2="238.0" y2="485.5"/><line x1="239.0" y1="478" x2="239.0" y2="485.5"/><line x1="240.0" y1="478" x2="240.0" y2="485.5"/><line x1="242.0" y1="478" x2="242.0" y2="485.5"/><line x1="243.0" y1="486" x2="243.0" y2="493.5"/><line x1="244.0" y1="486" x2="244.0" y2="493.5"/><line x1="245.0" y1="486" x2="245.0" y2="493.5"/><line x1="253.0" y1="486" x2="253.0" y2="493.5"/><line x1="255.0" y1="486" x2="255.0" y2="493.5"/><line x1="258.0" y1="486" x2="258.0" y2="493.5"/><line x1="264.0" y1="486" x2="264.0" y2="493.5"/><line x1="274.0" y1="478" x2="274.0" y2="485.5"/><line x1="275.0" y1="478" x2="275.0" y2="485.5"/><line x1="276.0" y1="478" x2="276.0" y2="485.5"/><line x1="278.0" y1="478" x2="278.0" y2="485.5"/><line x1="285.0" y1="478" x2="285.0" y2="485.5"/><line x1="291.0" y1="478" x2="291.0" y2="485.5"/><line x1="293.0" y1="478" x2="293.0" y2="485.5"/><line x1="294.0" y1="478" x2="294.0" y2="485.5"/><line x1="295.0" y1="478" x2="295.0" y2="485.5"/><line x1="297.0" y1="478" x2="297.0" y2="485.5"/><line x1="307.0" y1="478" x2="307.0" y2="485.5"/><line x1="308.0" y1="478" x2="308.0" y2="485.5"/><line x1="309.0" y1="478" x2="309.0" y2="485.5"/><line x1="311.0" y1="486" x2="311.0" y2="493.5"/><line x1="313.0" y1="478" x2="313.0" y2="485.5"/><line x1="314.0" y1="478" x2="314.0" y2="485.5"/><line x1="315.0" y1="478" x2="315.0" y2="485.5"/><line x1="319.0" y1="478" x2="319.0" y2="485.5"/><line x1="323.0" y1="478" x2="323.0" y2="485.5"/><line x1="325.0" y1="478" x2="325.0" y2="485.5"/><line x1="328.0" y1="478" x2="328.0" y2="485.5"/><line x1="333.0" y1="486" x2="333.0" y2="493.5"/><line x1="334.0" y1="486" x2="334.0" y2="493.5"/><line x1="336.0" y1="486" x2="336.0" y2="493.5"/><line x1="338.0" y1="486" x2="338.0" y2="493.5"/><line x1="341.0" y1="486" x2="341.0" y2="493.5"/><line x1="346.0" y1="486" x2="346.0" y2="493.5"/><line x1="349.0" y1="493" x2="349.0" y2="500.5"/><line x1="350.0" y1="493" x2="350.0" y2="500.5"/><line x1="353.0" y1="508" x2="353.0" y2="515.5"/><line x1="354.0" y1="508" x2="354.0" y2="515.5"/><line x1="355.0" y1="508" x2="355.0" y2="515.5"/><line x1="356.0" y1="508" x2="356.0" y2="515.5"/><line x1="358.0" y1="508" x2="358.0" y2="515.5"/><line x1="361.0" y1="508" x2="361.0" y2="515.5"/><line x1="365.0" y1="508" x2="365.0" y2="515.5"/><line x1="372.0" y1="516" x2="372.0" y2="523.5"/><line x1="373.0" y1="516" x2="373.0" y2="523.5"/><line x1="374.0" y1="516" x2="374.0" y2="523.5"/><line x1="376.0" y1="516" x2="376.0" y2="523.5"/><line x1="378.0" y1="516" x2="378.0" y2="523.5"/><line x1="379.0" y1="516" x2="379.0" y2="523.5"/><line x1="381.0" y1="516" x2="381.0" y2="523.5"/><line x1="391.0" y1="516" x2="391.0" y2="523.5"/><line x1="396.0" y1="516" x2="396.0" y2="523.5"/><line x1="397.0" y1="516" x2="397.0" y2="523.5"/><line x1="399.0" y1="516" x2="399.0" y2="523.5"/><line x1="401.0" y1="516" x2="401.0" y2="523.5"/><line x1="402.0" y1="516" x2="402.0" y2="523.5"/><line x1="405.0" y1="516" x2="405.0" y2="523.5"/><line x1="407.0" y1="516" x2="407.0" y2="523.5"/><line x1="410.0" y1="501" x2="410.0" y2="508.5"/><line x1="411.0" y1="501" x2="411.0" y2="508.5"/><line x1="412.0" y1="501" x2="412.0" y2="508.5"/><line x1="415.0" y1="493" x2="415.0" y2="500.5"/><line x1="419.0" y1="493" x2="419.0" y2="500.5"/><line x1="420.0" y1="493" x2="420.0" y2="500.5"/><line x1="421.0" y1="493" x2="421.0" y2="500.5"/><line x1="422.0" y1="493" x2="422.0" y2="500.5"/><line x1="423.0" y1="520" x2="423.0" y2="527.5"/><line x1="424.0" y1="520" x2="424.0" y2="527.5"/><line x1="425.0" y1="520" x2="425.0" y2="527.5"/><line x1="433.0" y1="515" x2="433.0" y2="522.5"/><line x1="434.0" y1="515" x2="434.0" y2="522.5"/><line x1="435.0" y1="515" x2="435.0" y2="522.5"/><line x1="437.0" y1="501" x2="437.0" y2="508.5"/><line x1="441.0" y1="501" x2="441.0" y2="508.5"/><line x1="442.0" y1="501" x2="442.0" y2="508.5"/><line x1="443.0" y1="501" x2="443.0" y2="508.5"/><line x1="449.0" y1="501" x2="449.0" y2="508.5"/><line x1="450.0" y1="501" x2="450.0" y2="508.5"/><line x1="455.0" y1="493" x2="455.0" y2="500.5"/><line x1="461.0" y1="493" x2="461.0" y2="500.5"/><line x1="462.0" y1="493" x2="462.0" y2="500.5"/><line x1="463.0" y1="486" x2="463.0" y2="493.5"/><line x1="472.0" y1="486" x2="472.0" y2="493.5"/><line x1="474.0" y1="486" x2="474.0" y2="493.5"/><line x1="477.0" y1="486" x2="477.0" y2="493.5"/><line x1="478.0" y1="486" x2="478.0" y2="493.5"/><line x1="479.0" y1="486" x2="479.0" y2="493.5"/><line x1="482.0" y1="486" x2="482.0" y2="493.5"/><line x1="483.0" y1="486" x2="483.0" y2="493.5"/><line x1="487.0" y1="486" x2="487.0" y2="493.5"/><line x1="489.0" y1="486" x2="489.0" y2="493.5"/><line x1="490.0" y1="501" x2="490.0" y2="508.5"/><line x1="496.0" y1="501" x2="496.0" y2="508.5"/><line x1="497.0" y1="501" x2="497.0" y2="508.5"/><line x1="500.0" y1="501" x2="500.0" y2="508.5"/><line x1="501.0" y1="501" x2="501.0" y2="508.5"/><line x1="505.0" y1="501" x2="505.0" y2="508.5"/><line x1="508.0" y1="493" x2="508.0" y2="500.5"/><line x1="509.0" y1="493" x2="509.0" y2="500.5"/><line x1="510.0" y1="493" x2="510.0" y2="500.5"/><line x1="513.0" y1="493" x2="513.0" y2="500.5"/><line x1="517.0" y1="493" x2="517.0" y2="500.5"/><line x1="519.0" y1="493" x2="519.0" y2="500.5"/><line x1="521.0" y1="493" x2="521.0" y2="500.5"/><line x1="522.0" y1="493" x2="522.0" y2="500.5"/><line x1="524.0" y1="493" x2="524.0" y2="500.5"/><line x1="527.0" y1="493" x2="527.0" y2="500.5"/><line x1="528.0" y1="493" x2="528.0" y2="500.5"/><line x1="532.0" y1="493" x2="532.0" y2="500.5"/><line x1="534.0" y1="493" x2="534.0" y2="500.5"/><line x1="536.0" y1="493" x2="536.0" y2="500.5"/><line x1="537.0" y1="493" x2="537.0" y2="500.5"/><line x1="538.0" y1="493" x2="538.0" y2="500.5"/><line x1="545.0" y1="493" x2="545.0" y2="500.5"/><line x1="546.0" y1="493" x2="546.0" y2="500.5"/><line x1="549.0" y1="493" x2="549.0" y2="500.5"/><line x1="553.0" y1="486" x2="553.0" y2="493.5"/><line x1="554.0" y1="486" x2="554.0" y2="493.5"/><line x1="555.0" y1="486" x2="555.0" y2="493.5"/><line x1="556.0" y1="486" x2="556.0" y2="493.5"/><line x1="559.0" y1="486" x2="559.0" y2="493.5"/><line x1="561.0" y1="486" x2="561.0" y2="493.5"/><line x1="566.0" y1="486" x2="566.0" y2="493.5"/><line x1="570.0" y1="486" x2="570.0" y2="493.5"/><line x1="573.0" y1="486" x2="573.0" y2="493.5"/><line x1="577.0" y1="486" x2="577.0" y2="493.5"/><line x1="578.0" y1="493" x2="578.0" y2="500.5"/><line x1="579.0" y1="493" x2="579.0" y2="500.5"/><line x1="581.0" y1="493" x2="581.0" y2="500.5"/><line x1="584.0" y1="493" x2="584.0" y2="500.5"/><line x1="585.0" y1="493" x2="585.0" y2="500.5"/><line x1="588.0" y1="493" x2="588.0" y2="500.5"/><line x1="590.0" y1="493" x2="590.0" y2="500.5"/><line x1="591.0" y1="493" x2="591.0" y2="500.5"/><line x1="592.0" y1="493" x2="592.0" y2="500.5"/><line x1="597.0" y1="501" x2="597.0" y2="508.5"/><line x1="598.0" y1="501" x2="598.0" y2="508.5"/><line x1="603.0" y1="501" x2="603.0" y2="508.5"/><line x1="607.0" y1="508" x2="607.0" y2="515.5"/><line x1="613.0" y1="516" x2="613.0" y2="523.5"/><line x1="614.0" y1="516" x2="614.0" y2="523.5"/><line x1="617.0" y1="516" x2="617.0" y2="523.5"/><line x1="618.0" y1="516" x2="618.0" y2="523.5"/><line x1="620.0" y1="516" x2="620.0" y2="523.5"/><line x1="621.0" y1="516" x2="621.0" y2="523.5"/><line x1="622.0" y1="516" x2="622.0" y2="523.5"/><line x1="624.0" y1="516" x2="624.0" y2="523.5"/><line x1="628.0" y1="523" x2="628.0" y2="530.5"/><line x1="629.0" y1="523" x2="629.0" y2="530.5"/><line x1="630.0" y1="523" x2="630.0" y2="530.5"/><line x1="634.0" y1="523" x2="634.0" y2="530.5"/><line x1="641.0" y1="523" x2="641.0" y2="530.5"/><line x1="643.0" y1="523" x2="643.0" y2="530.5"/><line x1="647.0" y1="523" x2="647.0" y2="530.5"/><line x1="648.0" y1="523" x2="648.0" y2="530.5"/><line x1="649.0" y1="523" x2="649.0" y2="530.5"/><line x1="650.0" y1="523" x2="650.0" y2="530.5"/><line x1="653.0" y1="523" x2="653.0" y2="530.5"/><line x1="657.0" y1="523" x2="657.0" y2="530.5"/><line x1="661.0" y1="516" x2="661.0" y2="523.5"/><line x1="666.0" y1="516" x2="666.0" y2="523.5"/><line x1="667.0" y1="516" x2="667.0" y2="523.5"/><line x1="668.0" y1="516" x2="668.0" y2="523.5"/><line x1="669.0" y1="516" x2="669.0" y2="523.5"/><line x1="676.0" y1="516" x2="676.0" y2="523.5"/><line x1="679.0" y1="501" x2="679.0" y2="508.5"/><line x1="682.0" y1="560" x2="682.0" y2="567.5"/><line x1="684.0" y1="520" x2="684.0" y2="527.5"/><line x1="685.0" y1="520" x2="685.0" y2="527.5"/><line x1="686.0" y1="520" x2="686.0" y2="527.5"/><line x1="689.0" y1="493" x2="689.0" y2="500.5"/><line x1="690.0" y1="493" x2="690.0" y2="500.5"/><line x1="691.0" y1="493" x2="691.0" y2="500.5"/><line x1="693.0" y1="493" x2="693.0" y2="500.5"/><line x1="694.0" y1="493" x2="694.0" y2="500.5"/><line x1="695.0" y1="493" x2="695.0" y2="500.5"/><line x1="698.0" y1="493" x2="698.0" y2="500.5"/><line x1="699.0" y1="493" x2="699.0" y2="500.5"/><line x1="703.0" y1="493" x2="703.0" y2="500.5"/><line x1="704.0" y1="493" x2="704.0" y2="500.5"/><line x1="707.0" y1="493" x2="707.0" y2="500.5"/><line x1="708.0" y1="493" x2="708.0" y2="500.5"/><line x1="710.0" y1="493" x2="710.0" y2="500.5"/><line x1="717.0" y1="493" x2="717.0" y2="500.5"/><line x1="719.0" y1="493" x2="719.0" y2="500.5"/><line x1="720.0" y1="493" x2="720.0" y2="500.5"/><line x1="727.0" y1="493" x2="727.0" y2="500.5"/><line x1="728.0" y1="493" x2="728.0" y2="500.5"/><line x1="732.0" y1="493" x2="732.0" y2="500.5"/><line x1="736.0" y1="501" x2="736.0" y2="508.5"/><line x1="737.0" y1="501" x2="737.0" y2="508.5"/><line x1="740.0" y1="501" x2="740.0" y2="508.5"/><line x1="744.0" y1="501" x2="744.0" y2="508.5"/><line x1="745.0" y1="501" x2="745.0" y2="508.5"/><line x1="749.0" y1="501" x2="749.0" y2="508.5"/><line x1="755.0" y1="493" x2="755.0" y2="500.5"/><line x1="757.0" y1="493" x2="757.0" y2="500.5"/><line x1="761.0" y1="493" x2="761.0" y2="500.5"/><line x1="762.0" y1="493" x2="762.0" y2="500.5"/><line x1="766.0" y1="493" x2="766.0" y2="500.5"/><line x1="767.0" y1="493" x2="767.0" y2="500.5"/><line x1="770.0" y1="493" x2="770.0" y2="500.5"/><line x1="773.0" y1="493" x2="773.0" y2="500.5"/><line x1="775.0" y1="493" x2="775.0" y2="500.5"/><line x1="779.0" y1="493" x2="779.0" y2="500.5"/><line x1="786.0" y1="501" x2="786.0" y2="508.5"/><line x1="789.0" y1="501" x2="789.0" y2="508.5"/><line x1="793.0" y1="501" x2="793.0" y2="508.5"/><line x1="795.0" y1="501" x2="795.0" y2="508.5"/><line x1="796.0" y1="501" x2="796.0" y2="508.5"/><line x1="798.0" y1="493" x2="798.0" y2="500.5"/><line x1="801.0" y1="493" x2="801.0" y2="500.5"/><line x1="803.0" y1="493" x2="803.0" y2="500.5"/><line x1="807.0" y1="493" x2="807.0" y2="500.5"/><line x1="811.0" y1="493" x2="811.0" y2="500.5"/><line x1="816.0" y1="493" x2="816.0" y2="500.5"/><line x1="821.0" y1="493" x2="821.0" y2="500.5"/><line x1="824.0" y1="493" x2="824.0" y2="500.5"/><line x1="827.0" y1="493" x2="827.0" y2="500.5"/><line x1="829.0" y1="493" x2="829.0" y2="500.5"/><line x1="831.0" y1="493" x2="831.0" y2="500.5"/><line x1="834.0" y1="493" x2="834.0" y2="500.5"/><line x1="835.0" y1="493" x2="835.0" y2="500.5"/><line x1="837.0" y1="501" x2="837.0" y2="508.5"/><line x1="838.0" y1="501" x2="838.0" y2="508.5"/><line x1="839.0" y1="501" x2="839.0" y2="508.5"/><line x1="840.0" y1="501" x2="840.0" y2="508.5"/><line x1="844.0" y1="501" x2="844.0" y2="508.5"/><line x1="846.0" y1="501" x2="846.0" y2="508.5"/><line x1="854.0" y1="508" x2="854.0" y2="515.5"/><line x1="859.0" y1="508" x2="859.0" y2="515.5"/><line x1="865.0" y1="523" x2="865.0" y2="530.5"/><line x1="867.0" y1="523" x2="867.0" y2="530.5"/><line x1="869.0" y1="523" x2="869.0" y2="530.5"/><line x1="874.0" y1="523" x2="874.0" y2="530.5"/><line x1="875.0" y1="523" x2="875.0" y2="530.5"/><line x1="876.0" y1="523" x2="876.0" y2="530.5"/><line x1="877.0" y1="516" x2="877.0" y2="523.5"/><line x1="882.0" y1="516" x2="882.0" y2="523.5"/><line x1="883.0" y1="516" x2="883.0" y2="523.5"/><line x1="885.0" y1="523" x2="885.0" y2="530.5"/><line x1="886.0" y1="523" x2="886.0" y2="530.5"/><line x1="888.0" y1="523" x2="888.0" y2="530.5"/><line x1="890.0" y1="523" x2="890.0" y2="530.5"/><line x1="893.0" y1="523" x2="893.0" y2="530.5"/><line x1="896.0" y1="523" x2="896.0" y2="530.5"/><line x1="898.0" y1="523" x2="898.0" y2="530.5"/><line x1="899.0" y1="523" x2="899.0" y2="530.5"/><line x1="900.0" y1="523" x2="900.0" y2="530.5"/><line x1="905.0" y1="516" x2="905.0" y2="523.5"/><line x1="906.0" y1="516" x2="906.0" y2="523.5"/><line x1="914.0" y1="516" x2="914.0" y2="523.5"/><line x1="916.0" y1="516" x2="916.0" y2="523.5"/><line x1="919.0" y1="505" x2="919.0" y2="512.5"/><line x1="920.0" y1="505" x2="920.0" y2="512.5"/><line x1="922.0" y1="505" x2="922.0" y2="512.5"/></g>
<g stroke="#38ec38" stroke-width="1.1"><line x1="176.6" y1="508" x2="176.6" y2="515.5"/><line x1="183.3" y1="508" x2="183.3" y2="530.5"/><line x1="183.1" y1="508" x2="183.1" y2="530.5"/><line x1="181.5" y1="508" x2="181.5" y2="523"/><line x1="177.1" y1="508" x2="177.1" y2="523"/><line x1="175.1" y1="508" x2="175.1" y2="530.5"/><line x1="192.7" y1="493" x2="192.7" y2="515.5"/><line x1="203.0" y1="493" x2="203.0" y2="515.5"/><line x1="199.5" y1="493" x2="199.5" y2="508"/><line x1="203.8" y1="493" x2="203.8" y2="515.5"/><line x1="204.8" y1="493" x2="204.8" y2="500.5"/><line x1="211.2" y1="486" x2="211.2" y2="501"/><line x1="207.2" y1="486" x2="207.2" y2="493.5"/><line x1="216.9" y1="486" x2="216.9" y2="508.5"/><line x1="213.6" y1="486" x2="213.6" y2="501"/><line x1="226.4" y1="486" x2="226.4" y2="508.5"/><line x1="227.1" y1="486" x2="227.1" y2="501"/><line x1="223.7" y1="486" x2="223.7" y2="501"/><line x1="237.5" y1="478" x2="237.5" y2="500.5"/><line x1="234.5" y1="478" x2="234.5" y2="508"/><line x1="241.8" y1="478" x2="241.8" y2="493"/><line x1="232.4" y1="478" x2="232.4" y2="485.5"/><line x1="229.3" y1="478" x2="229.3" y2="493"/><line x1="243.2" y1="486" x2="243.2" y2="501"/><line x1="256.6" y1="486" x2="256.6" y2="516"/><line x1="254.2" y1="486" x2="254.2" y2="493.5"/><line x1="254.2" y1="486" x2="254.2" y2="501"/><line x1="245.9" y1="486" x2="245.9" y2="501"/><line x1="262.6" y1="486" x2="262.6" y2="493.5"/><line x1="263.3" y1="486" x2="263.3" y2="516"/><line x1="266.8" y1="486" x2="266.8" y2="508.5"/><line x1="271.7" y1="486" x2="271.7" y2="516"/><line x1="271.7" y1="486" x2="271.7" y2="501"/><line x1="289.9" y1="478" x2="289.9" y2="493"/><line x1="298.5" y1="478" x2="298.5" y2="508"/><line x1="273.0" y1="478" x2="273.0" y2="500.5"/><line x1="280.9" y1="478" x2="280.9" y2="493"/><line x1="302.0" y1="478" x2="302.0" y2="493"/><line x1="295.7" y1="478" x2="295.7" y2="485.5"/><line x1="293.5" y1="478" x2="293.5" y2="485.5"/><line x1="277.5" y1="478" x2="277.5" y2="485.5"/><line x1="276.3" y1="478" x2="276.3" y2="493"/><line x1="307.3" y1="478" x2="307.3" y2="493"/><line x1="309.1" y1="478" x2="309.1" y2="500.5"/><line x1="273.1" y1="478" x2="273.1" y2="485.5"/><line x1="277.3" y1="478" x2="277.3" y2="500.5"/><line x1="296.1" y1="478" x2="296.1" y2="500.5"/><line x1="310.2" y1="486" x2="310.2" y2="493.5"/><line x1="314.1" y1="478" x2="314.1" y2="493"/><line x1="326.0" y1="478" x2="326.0" y2="485.5"/><line x1="326.9" y1="478" x2="326.9" y2="508"/><line x1="322.1" y1="478" x2="322.1" y2="500.5"/><line x1="314.1" y1="478" x2="314.1" y2="508"/><line x1="325.8" y1="478" x2="325.8" y2="500.5"/><line x1="347.0" y1="486" x2="347.0" y2="493.5"/><line x1="334.4" y1="486" x2="334.4" y2="493.5"/><line x1="332.0" y1="486" x2="332.0" y2="493.5"/><line x1="347.1" y1="486" x2="347.1" y2="516"/><line x1="343.6" y1="486" x2="343.6" y2="493.5"/><line x1="344.9" y1="486" x2="344.9" y2="508.5"/><line x1="351.2" y1="493" x2="351.2" y2="508"/><line x1="354.4" y1="508" x2="354.4" y2="515.5"/><line x1="364.1" y1="508" x2="364.1" y2="530.5"/><line x1="355.9" y1="508" x2="355.9" y2="523"/><line x1="357.7" y1="508" x2="357.7" y2="523"/><line x1="353.3" y1="508" x2="353.3" y2="523"/><line x1="373.5" y1="516" x2="373.5" y2="523.5"/><line x1="372.0" y1="516" x2="372.0" y2="531"/><line x1="382.2" y1="516" x2="382.2" y2="546"/><line x1="382.7" y1="516" x2="382.7" y2="531"/><line x1="378.3" y1="516" x2="378.3" y2="531"/><line x1="399.7" y1="516" x2="399.7" y2="523.5"/><line x1="404.3" y1="516" x2="404.3" y2="523.5"/><line x1="394.8" y1="516" x2="394.8" y2="546"/><line x1="385.7" y1="516" x2="385.7" y2="531"/><line x1="402.0" y1="516" x2="402.0" y2="531"/><line x1="398.3" y1="516" x2="398.3" y2="538.5"/><line x1="406.3" y1="516" x2="406.3" y2="523.5"/><line x1="398.5" y1="516" x2="398.5" y2="531"/><line x1="387.6" y1="516" x2="387.6" y2="523.5"/><line x1="397.1" y1="516" x2="397.1" y2="531"/><line x1="413.0" y1="501" x2="413.0" y2="508.5"/><line x1="414.0" y1="493" x2="414.0" y2="508"/><line x1="414.9" y1="493" x2="414.9" y2="515.5"/><line x1="421.2" y1="493" x2="421.2" y2="500.5"/><line x1="426.9" y1="520" x2="426.9" y2="535"/><line x1="428.7" y1="535" x2="428.7" y2="565"/><line x1="434.1" y1="515" x2="434.1" y2="530"/><line x1="451.1" y1="501" x2="451.1" y2="516"/><line x1="449.0" y1="501" x2="449.0" y2="523.5"/><line x1="439.7" y1="501" x2="439.7" y2="508.5"/><line x1="437.8" y1="501" x2="437.8" y2="523.5"/><line x1="448.3" y1="501" x2="448.3" y2="516"/><line x1="448.6" y1="501" x2="448.6" y2="523.5"/><line x1="458.2" y1="493" x2="458.2" y2="500.5"/><line x1="458.9" y1="493" x2="458.9" y2="508"/><line x1="453.0" y1="493" x2="453.0" y2="508"/><line x1="461.8" y1="493" x2="461.8" y2="515.5"/><line x1="464.5" y1="486" x2="464.5" y2="508.5"/><line x1="463.4" y1="486" x2="463.4" y2="493.5"/><line x1="468.2" y1="486" x2="468.2" y2="501"/><line x1="478.3" y1="486" x2="478.3" y2="501"/><line x1="465.9" y1="486" x2="465.9" y2="508.5"/><line x1="467.0" y1="486" x2="467.0" y2="501"/><line x1="481.3" y1="486" x2="481.3" y2="501"/><line x1="487.5" y1="486" x2="487.5" y2="516"/><line x1="486.1" y1="486" x2="486.1" y2="493.5"/><line x1="496.3" y1="501" x2="496.3" y2="516"/><line x1="499.4" y1="501" x2="499.4" y2="531"/><line x1="505.2" y1="501" x2="505.2" y2="523.5"/><line x1="500.0" y1="501" x2="500.0" y2="516"/><line x1="493.1" y1="501" x2="493.1" y2="516"/><line x1="502.4" y1="501" x2="502.4" y2="516"/><line x1="532.3" y1="493" x2="532.3" y2="500.5"/><line x1="522.0" y1="493" x2="522.0" y2="515.5"/><line x1="545.2" y1="493" x2="545.2" y2="500.5"/><line x1="529.3" y1="493" x2="529.3" y2="508"/><line x1="520.7" y1="493" x2="520.7" y2="515.5"/><line x1="542.7" y1="493" x2="542.7" y2="508"/><line x1="514.5" y1="493" x2="514.5" y2="500.5"/><line x1="548.9" y1="493" x2="548.9" y2="515.5"/><line x1="521.7" y1="493" x2="521.7" y2="508"/><line x1="522.6" y1="493" x2="522.6" y2="500.5"/><line x1="521.8" y1="493" x2="521.8" y2="500.5"/><line x1="518.9" y1="493" x2="518.9" y2="515.5"/><line x1="549.8" y1="493" x2="549.8" y2="500.5"/><line x1="548.4" y1="493" x2="548.4" y2="500.5"/><line x1="516.2" y1="493" x2="516.2" y2="500.5"/><line x1="549.3" y1="493" x2="549.3" y2="523"/><line x1="558.5" y1="486" x2="558.5" y2="501"/><line x1="562.2" y1="486" x2="562.2" y2="493.5"/><line x1="553.1" y1="486" x2="553.1" y2="493.5"/><line x1="557.9" y1="486" x2="557.9" y2="501"/><line x1="563.0" y1="486" x2="563.0" y2="493.5"/><line x1="561.2" y1="486" x2="561.2" y2="516"/><line x1="562.2" y1="486" x2="562.2" y2="493.5"/><line x1="564.0" y1="486" x2="564.0" y2="508.5"/><line x1="558.3" y1="486" x2="558.3" y2="493.5"/><line x1="554.0" y1="486" x2="554.0" y2="501"/><line x1="592.0" y1="493" x2="592.0" y2="500.5"/><line x1="592.1" y1="493" x2="592.1" y2="523"/><line x1="586.2" y1="493" x2="586.2" y2="508"/><line x1="589.2" y1="493" x2="589.2" y2="515.5"/><line x1="586.0" y1="493" x2="586.0" y2="500.5"/><line x1="590.7" y1="493" x2="590.7" y2="515.5"/><line x1="594.7" y1="493" x2="594.7" y2="523"/><line x1="602.1" y1="501" x2="602.1" y2="516"/><line x1="603.8" y1="501" x2="603.8" y2="523.5"/><line x1="598.5" y1="501" x2="598.5" y2="508.5"/><line x1="607.7" y1="508" x2="607.7" y2="523"/><line x1="606.6" y1="508" x2="606.6" y2="530.5"/><line x1="612.7" y1="516" x2="612.7" y2="531"/><line x1="615.1" y1="516" x2="615.1" y2="531"/><line x1="623.1" y1="516" x2="623.1" y2="538.5"/><line x1="613.7" y1="516" x2="613.7" y2="546"/><line x1="618.2" y1="516" x2="618.2" y2="531"/><line x1="611.3" y1="516" x2="611.3" y2="546"/><line x1="631.3" y1="523" x2="631.3" y2="545.5"/><line x1="633.3" y1="523" x2="633.3" y2="553"/><line x1="629.5" y1="523" x2="629.5" y2="545.5"/><line x1="644.2" y1="523" x2="644.2" y2="530.5"/><line x1="645.7" y1="523" x2="645.7" y2="538"/><line x1="658.7" y1="523" x2="658.7" y2="530.5"/><line x1="637.0" y1="523" x2="637.0" y2="538"/><line x1="641.4" y1="523" x2="641.4" y2="545.5"/><line x1="655.5" y1="523" x2="655.5" y2="530.5"/><line x1="649.0" y1="523" x2="649.0" y2="530.5"/><line x1="657.2" y1="523" x2="657.2" y2="538"/><line x1="649.5" y1="523" x2="649.5" y2="545.5"/><line x1="668.6" y1="516" x2="668.6" y2="523.5"/><line x1="671.2" y1="516" x2="671.2" y2="546"/><line x1="666.9" y1="516" x2="666.9" y2="531"/><line x1="667.6" y1="516" x2="667.6" y2="531"/><line x1="664.4" y1="516" x2="664.4" y2="538.5"/><line x1="663.9" y1="516" x2="663.9" y2="531"/><line x1="680.1" y1="501" x2="680.1" y2="508.5"/><line x1="683.2" y1="560" x2="683.2" y2="575"/><line x1="685.1" y1="520" x2="685.1" y2="527.5"/><line x1="698.6" y1="493" x2="698.6" y2="508"/><line x1="705.4" y1="493" x2="705.4" y2="500.5"/><line x1="690.5" y1="493" x2="690.5" y2="508"/><line x1="715.9" y1="493" x2="715.9" y2="515.5"/><line x1="703.2" y1="493" x2="703.2" y2="508"/><line x1="692.0" y1="493" x2="692.0" y2="508"/><line x1="721.1" y1="493" x2="721.1" y2="508"/><line x1="731.7" y1="493" x2="731.7" y2="523"/><line x1="731.2" y1="493" x2="731.2" y2="508"/><line x1="696.8" y1="493" x2="696.8" y2="500.5"/><line x1="729.8" y1="493" x2="729.8" y2="500.5"/><line x1="724.2" y1="493" x2="724.2" y2="515.5"/><line x1="695.9" y1="493" x2="695.9" y2="515.5"/><line x1="712.9" y1="493" x2="712.9" y2="500.5"/><line x1="724.5" y1="493" x2="724.5" y2="500.5"/><line x1="703.2" y1="493" x2="703.2" y2="515.5"/><line x1="725.2" y1="493" x2="725.2" y2="523"/><line x1="746.9" y1="501" x2="746.9" y2="516"/><line x1="749.9" y1="501" x2="749.9" y2="531"/><line x1="742.3" y1="501" x2="742.3" y2="508.5"/><line x1="746.3" y1="501" x2="746.3" y2="516"/><line x1="739.0" y1="501" x2="739.0" y2="531"/><line x1="736.9" y1="501" x2="736.9" y2="523.5"/><line x1="763.2" y1="493" x2="763.2" y2="508"/><line x1="784.4" y1="493" x2="784.4" y2="515.5"/><line x1="756.5" y1="493" x2="756.5" y2="500.5"/><line x1="778.2" y1="493" x2="778.2" y2="523"/><line x1="759.8" y1="493" x2="759.8" y2="500.5"/><line x1="772.9" y1="493" x2="772.9" y2="508"/><line x1="766.8" y1="493" x2="766.8" y2="508"/><line x1="771.8" y1="493" x2="771.8" y2="500.5"/><line x1="773.1" y1="493" x2="773.1" y2="508"/><line x1="755.3" y1="493" x2="755.3" y2="508"/><line x1="779.9" y1="493" x2="779.9" y2="500.5"/><line x1="753.0" y1="493" x2="753.0" y2="508"/><line x1="781.7" y1="493" x2="781.7" y2="523"/><line x1="797.3" y1="501" x2="797.3" y2="516"/><line x1="795.8" y1="501" x2="795.8" y2="523.5"/><line x1="792.6" y1="501" x2="792.6" y2="523.5"/><line x1="785.1" y1="501" x2="785.1" y2="508.5"/><line x1="793.5" y1="501" x2="793.5" y2="516"/><line x1="821.7" y1="493" x2="821.7" y2="508"/><line x1="803.6" y1="493" x2="803.6" y2="500.5"/><line x1="805.2" y1="493" x2="805.2" y2="508"/><line x1="811.5" y1="493" x2="811.5" y2="500.5"/><line x1="806.1" y1="493" x2="806.1" y2="508"/><line x1="828.9" y1="493" x2="828.9" y2="500.5"/><line x1="821.8" y1="493" x2="821.8" y2="515.5"/><line x1="821.7" y1="493" x2="821.7" y2="523"/><line x1="801.5" y1="493" x2="801.5" y2="508"/><line x1="828.7" y1="493" x2="828.7" y2="523"/><line x1="809.6" y1="493" x2="809.6" y2="508"/><line x1="825.0" y1="493" x2="825.0" y2="508"/><line x1="801.1" y1="493" x2="801.1" y2="523"/><line x1="815.1" y1="493" x2="815.1" y2="500.5"/><line x1="819.6" y1="493" x2="819.6" y2="508"/><line x1="841.6" y1="501" x2="841.6" y2="531"/><line x1="838.5" y1="501" x2="838.5" y2="516"/><line x1="843.1" y1="501" x2="843.1" y2="516"/><line x1="842.1" y1="501" x2="842.1" y2="508.5"/><line x1="857.1" y1="508" x2="857.1" y2="515.5"/><line x1="854.5" y1="508" x2="854.5" y2="523"/><line x1="855.8" y1="508" x2="855.8" y2="530.5"/><line x1="848.1" y1="508" x2="848.1" y2="538"/><line x1="852.2" y1="508" x2="852.2" y2="530.5"/><line x1="870.0" y1="523" x2="870.0" y2="545.5"/><line x1="865.7" y1="523" x2="865.7" y2="538"/><line x1="867.0" y1="523" x2="867.0" y2="538"/><line x1="877.0" y1="523" x2="877.0" y2="545.5"/><line x1="862.2" y1="523" x2="862.2" y2="545.5"/><line x1="866.8" y1="523" x2="866.8" y2="545.5"/><line x1="877.2" y1="516" x2="877.2" y2="531"/><line x1="877.4" y1="516" x2="877.4" y2="538.5"/><line x1="884.5" y1="516" x2="884.5" y2="531"/><line x1="901.2" y1="523" x2="901.2" y2="530.5"/><line x1="895.2" y1="523" x2="895.2" y2="538"/><line x1="900.1" y1="523" x2="900.1" y2="530.5"/><line x1="885.7" y1="523" x2="885.7" y2="545.5"/><line x1="893.3" y1="523" x2="893.3" y2="530.5"/><line x1="891.8" y1="523" x2="891.8" y2="553"/><line x1="898.2" y1="523" x2="898.2" y2="538"/><line x1="910.7" y1="516" x2="910.7" y2="531"/><line x1="911.6" y1="516" x2="911.6" y2="523.5"/><line x1="908.4" y1="516" x2="908.4" y2="531"/><line x1="910.1" y1="516" x2="910.1" y2="531"/><line x1="917.4" y1="505" x2="917.4" y2="520"/><line x1="919.3" y1="505" x2="919.3" y2="535"/><line x1="920.9" y1="505" x2="920.9" y2="520"/><line x1="174.0" y1="508" x2="174.0" y2="530"/><line x1="181.0" y1="508" x2="181.0" y2="535"/><line x1="184.0" y1="508" x2="184.0" y2="540"/><line x1="226.0" y1="486" x2="226.0" y2="508"/><line x1="233.0" y1="486" x2="233.0" y2="520"/><line x1="289.0" y1="486" x2="289.0" y2="509"/><line x1="299.0" y1="486" x2="299.0" y2="514"/><line x1="330.0" y1="486" x2="330.0" y2="537"/><line x1="353.0" y1="500" x2="353.0" y2="520"/><line x1="420.0" y1="501" x2="420.0" y2="530"/><line x1="429.0" y1="535" x2="429.0" y2="584"/><line x1="426.0" y1="520" x2="426.0" y2="560"/><line x1="431.0" y1="530" x2="431.0" y2="560"/><line x1="474.0" y1="486" x2="474.0" y2="524"/><line x1="497.0" y1="501" x2="497.0" y2="524"/><line x1="508.0" y1="494" x2="508.0" y2="515"/><line x1="520.0" y1="494" x2="520.0" y2="524"/><line x1="545.0" y1="494" x2="545.0" y2="523"/><line x1="559.0" y1="494" x2="559.0" y2="530"/><line x1="563.0" y1="494" x2="563.0" y2="530"/><line x1="617.0" y1="524" x2="617.0" y2="545"/><line x1="645.0" y1="524" x2="645.0" y2="535"/><line x1="682.5" y1="560" x2="682.5" y2="607"/><line x1="725.0" y1="494" x2="725.0" y2="508"/><line x1="734.0" y1="500" x2="734.0" y2="530"/><line x1="740.0" y1="501" x2="740.0" y2="538"/><line x1="750.0" y1="501" x2="750.0" y2="530"/><line x1="782.0" y1="501" x2="782.0" y2="520"/><line x1="788.0" y1="501" x2="788.0" y2="532"/><line x1="826.0" y1="501" x2="826.0" y2="531"/><line x1="853.0" y1="516" x2="853.0" y2="541"/><line x1="864.0" y1="523" x2="864.0" y2="550"/><line x1="869.0" y1="523" x2="869.0" y2="583"/><line x1="888.0" y1="523" x2="888.0" y2="546"/><line x1="892.0" y1="523" x2="892.0" y2="554"/><line x1="907.0" y1="516" x2="907.0" y2="539"/><line x1="918.0" y1="525" x2="918.0" y2="556"/><line x1="922.0" y1="520" x2="922.0" y2="545"/><line x1="412.0" y1="501" x2="412.0" y2="519"/><line x1="458.0" y1="494" x2="458.0" y2="520"/><line x1="680.0" y1="500" x2="680.0" y2="540"/><line x1="684.0" y1="520" x2="684.0" y2="545"/></g>
<g stroke="#38ec38" stroke-width="1.1"><line x1="689" y1="471" x2="689" y2="481"/><line x1="693" y1="471" x2="693" y2="481"/><line x1="697" y1="471" x2="697" y2="481"/><line x1="707" y1="471" x2="707" y2="481"/><line x1="712" y1="471" x2="712" y2="481"/><line x1="716" y1="471" x2="716" y2="481"/><line x1="722" y1="471" x2="722" y2="481"/><line x1="727" y1="471" x2="727" y2="481"/><line x1="918" y1="486" x2="918" y2="496"/><line x1="921" y1="486" x2="921" y2="496"/><line x1="924" y1="488" x2="924" y2="498"/><line x1="213" y1="464" x2="213" y2="474"/><line x1="226" y1="464" x2="226" y2="474"/><line x1="300" y1="464" x2="300" y2="474"/><line x1="306" y1="464" x2="306" y2="474"/><line x1="387" y1="471" x2="387" y2="481"/><line x1="420" y1="472" x2="420" y2="482"/><line x1="477" y1="464" x2="477" y2="474"/><line x1="528" y1="464" x2="528" y2="474"/><line x1="552" y1="471" x2="552" y2="481"/><line x1="560" y1="471" x2="560" y2="481"/><line x1="690" y1="471" x2="690" y2="481"/><line x1="702" y1="471" x2="702" y2="481"/><line x1="718" y1="471" x2="718" y2="481"/><line x1="800" y1="478" x2="800" y2="488"/><line x1="805" y1="478" x2="805" y2="488"/></g>
<path d="M174.00,741.9 L174.45,742.9 L174.90,742.6 L175.35,737.4 L175.80,737.6 L176.25,742.5 L176.70,737.7 L177.15,742.1 L177.60,737.2 L178.05,737.1 L178.50,742.1 L178.95,742.3 L179.40,742.0 L179.85,742.0 L180.30,741.9 L180.75,741.3 L181.20,741.6 L181.65,741.1 L182.10,736.6 L182.55,742.2 L183.00,741.4 L183.45,742.0 L183.90,741.1 L184.35,736.8 L184.80,736.8 L185.25,742.0 L185.70,736.9 L186.15,736.4 L186.60,741.4 L187.05,741.2 L187.50,736.5 L187.95,741.8 L188.40,745.2 L188.85,736.2 L189.30,740.6 L189.75,736.0 L190.20,736.6 L190.65,736.9 L191.10,736.8 L191.55,735.9 L192.00,740.5 L192.45,740.4 L192.90,736.5 L193.35,741.3 L193.80,740.1 L194.25,741.0 L194.70,736.5 L195.15,736.5 L195.60,739.9 L196.05,736.2 L196.50,739.9 L196.95,736.2 L197.40,736.3 L197.85,735.4 L198.30,735.9 L198.75,736.0 L199.20,736.1 L199.65,735.9 L200.10,740.1 L200.55,735.9 L201.00,740.6 L201.45,739.8 L201.90,736.0 L202.35,740.5 L202.80,735.5 L203.25,746.5 L203.70,739.6 L204.15,735.7 L204.60,735.4 L205.05,740.3 L205.50,739.4 L205.95,734.9 L206.40,735.1 L206.85,740.1 L207.30,735.3 L207.75,740.0 L208.20,739.1 L208.65,739.8 L209.10,740.0 L209.55,734.3 L210.00,739.7 L210.45,734.9 L210.90,738.8 L211.35,739.4 L211.80,734.2 L212.25,734.7 L212.70,738.9 L213.15,734.7 L213.60,738.5 L214.05,739.4 L214.50,738.8 L214.95,734.3 L215.40,733.9 L215.85,734.3 L216.30,734.1 L216.75,734.0 L217.20,733.5 L217.65,741.9 L218.10,734.0 L218.55,737.9 L219.00,738.1 L219.45,737.6 L219.90,734.2 L220.35,738.2 L220.80,737.9 L221.25,738.1 L221.70,738.7 L222.15,738.9 L222.60,733.2 L223.05,733.4 L223.50,733.3 L223.95,738.8 L224.40,734.1 L224.85,737.6 L225.30,738.1 L225.75,734.2 L226.20,733.8 L226.65,738.9 L227.10,738.1 L227.55,733.4 L228.00,745.9 L228.45,733.2 L228.90,733.6 L229.35,738.9 L229.80,737.6 L230.25,738.6 L230.70,739.0 L231.15,733.3 L231.60,738.9 L232.05,737.9 L232.50,738.6 L232.95,733.5 L233.40,733.3 L233.85,733.4 L234.30,733.3 L234.75,737.5 L235.20,737.8 L235.65,734.1 L236.10,734.1 L236.55,738.8 L237.00,733.6 L237.45,734.1 L237.90,738.4 L238.35,733.5 L238.80,738.2 L239.25,737.7 L239.70,733.3 L240.15,738.3 L240.60,734.1 L241.05,733.7 L241.50,733.6 L241.95,738.2 L242.40,733.9 L242.85,734.4 L243.30,734.5 L243.75,734.5 L244.20,738.2 L244.65,734.0 L245.10,733.9 L245.55,734.7 L246.00,746.1 L246.45,734.1 L246.90,738.3 L247.35,738.7 L247.80,739.9 L248.25,738.8 L248.70,734.1 L249.15,739.2 L249.60,734.6 L250.05,738.8 L250.50,738.8 L250.95,735.1 L251.40,738.9 L251.85,734.5 L252.30,739.5 L252.75,734.7 L253.20,739.9 L253.65,739.7 L254.10,734.7 L254.55,739.6 L255.00,739.1 L255.45,739.5 L255.90,740.4 L256.35,734.9 L256.80,739.9 L257.25,739.6 L257.70,735.8 L258.15,735.2 L258.60,735.7 L259.05,735.6 L259.50,735.7 L259.95,735.9 L260.40,740.8 L260.85,735.9 L261.30,735.9 L261.75,736.0 L262.20,744.3 L262.65,740.1 L263.10,739.3 L263.55,742.3 L264.00,735.0 L264.45,735.7 L264.90,735.0 L265.35,739.4 L265.80,735.4 L266.25,739.9 L266.70,739.2 L267.15,740.1 L267.60,734.8 L268.05,735.2 L268.50,734.8 L268.95,734.7 L269.40,740.2 L269.85,735.1 L270.30,739.1 L270.75,740.2 L271.20,734.9 L271.65,739.5 L272.10,735.3 L272.55,739.2 L273.00,734.7 L273.45,735.3 L273.90,739.9 L274.35,739.8 L274.80,734.7 L275.25,746.5 L275.70,734.6 L276.15,739.0 L276.60,738.5 L277.05,734.6 L277.50,734.2 L277.95,745.2 L278.40,739.2 L278.85,739.6 L279.30,738.3 L279.75,738.6 L280.20,738.6 L280.65,739.5 L281.10,738.5 L281.55,738.7 L282.00,741.5 L282.45,734.4 L282.90,734.3 L283.35,743.0 L283.80,734.1 L284.25,738.1 L284.70,733.7 L285.15,733.9 L285.60,733.7 L286.05,734.0 L286.50,738.6 L286.95,738.7 L287.40,734.1 L287.85,733.9 L288.30,738.3 L288.75,733.5 L289.20,733.8 L289.65,733.8 L290.10,733.6 L290.55,737.9 L291.00,738.2 L291.45,734.2 L291.90,734.0 L292.35,733.3 L292.80,738.2 L293.25,733.6 L293.70,733.9 L294.15,733.4 L294.60,744.2 L295.05,733.5 L295.50,733.9 L295.95,738.8 L296.40,738.3 L296.85,738.6 L297.30,738.2 L297.75,738.6 L298.20,737.7 L298.65,737.5 L299.10,738.4 L299.55,734.2 L300.00,738.1 L300.45,738.8 L300.90,738.1 L301.35,733.7 L301.80,737.9 L302.25,733.8 L302.70,733.5 L303.15,738.8 L303.60,733.6 L304.05,733.5 L304.50,733.8 L304.95,737.6 L305.40,738.0 L305.85,738.8 L306.30,740.4 L306.75,734.1 L307.20,733.2 L307.65,738.2 L308.10,738.7 L308.55,739.0 L309.00,738.3 L309.45,738.1 L309.90,733.8 L310.35,734.1 L310.80,738.3 L311.25,733.6 L311.70,733.8 L312.15,738.8 L312.60,742.4 L313.05,733.8 L313.50,741.4 L313.95,738.7 L314.40,733.5 L314.85,744.8 L315.30,737.7 L315.75,738.5 L316.20,739.0 L316.65,738.1 L317.10,733.5 L317.55,738.3 L318.00,733.4 L318.45,738.4 L318.90,734.2 L319.35,737.6 L319.80,734.0 L320.25,733.9 L320.70,733.6 L321.15,738.5 L321.60,738.0 L322.05,734.0 L322.50,734.1 L322.95,739.3 L323.40,738.5 L323.85,733.7 L324.30,738.1 L324.75,733.8 L325.20,739.3 L325.65,739.3 L326.10,733.8 L326.55,738.6 L327.00,738.7 L327.45,734.2 L327.90,734.9 L328.35,738.9 L328.80,734.5 L329.25,735.0 L329.70,739.9 L330.15,734.8 L330.60,734.3 L331.05,739.9 L331.50,735.2 L331.95,739.2 L332.40,740.2 L332.85,735.4 L333.30,734.9 L333.75,739.2 L334.20,735.5 L334.65,735.5 L335.10,734.9 L335.55,734.9 L336.00,742.6 L336.45,739.3 L336.90,739.8 L337.35,735.0 L337.80,735.8 L338.25,735.3 L338.70,735.4 L339.15,735.1 L339.60,740.0 L340.05,735.9 L340.50,735.5 L340.95,739.8 L341.40,736.2 L341.85,739.9 L342.30,736.2 L342.75,736.4 L343.20,736.5 L343.65,740.2 L344.10,735.7 L344.55,740.3 L345.00,740.9 L345.45,736.0 L345.90,740.4 L346.35,740.3 L346.80,741.0 L347.25,736.7 L347.70,736.6 L348.15,740.8 L348.60,736.1 L349.05,737.0 L349.50,736.8 L349.95,736.8 L350.40,736.7 L350.85,736.4 L351.30,736.6 L351.75,737.1 L352.20,736.8 L352.65,741.9 L353.10,742.1 L353.55,736.8 L354.00,737.3 L354.45,741.5 L354.90,737.3 L355.35,741.4 L355.80,741.6 L356.25,741.4 L356.70,737.8 L357.15,742.3 L357.60,737.0 L358.05,737.2 L358.50,737.4 L358.95,737.4 L359.40,741.7 L359.85,742.3 L360.30,741.9 L360.75,738.0 L361.20,737.3 L361.65,742.8 L362.10,737.5 L362.55,742.7 L363.00,737.7 L363.45,738.3 L363.90,738.5 L364.35,742.1 L364.80,742.6 L365.25,743.3 L365.70,737.9 L366.15,742.8 L366.60,743.2 L367.05,743.4 L367.50,742.9 L367.95,738.7 L368.40,738.6 L368.85,742.6 L369.30,742.5 L369.75,743.7 L370.20,738.8 L370.65,748.5 L371.10,743.0 L371.55,738.7 L372.00,738.6 L372.45,738.6 L372.90,743.8 L373.35,738.8 L373.80,743.5 L374.25,743.5 L374.70,739.6 L375.15,739.3 L375.60,739.6 L376.05,744.2 L376.50,739.5 L376.95,743.9 L377.40,744.5 L377.85,739.3 L378.30,739.2 L378.75,739.4 L379.20,739.8 L379.65,739.3 L380.10,739.7 L380.55,739.4 L381.00,739.3 L381.45,750.3 L381.90,740.0 L382.35,749.1 L382.80,739.8 L383.25,739.6 L383.70,743.7 L384.15,744.7 L384.60,745.1 L385.05,744.1 L385.50,739.6 L385.95,740.3 L386.40,744.3 L386.85,740.2 L387.30,745.3 L387.75,740.4 L388.20,745.0 L388.65,739.8 L389.10,744.4 L389.55,740.2 L390.00,740.5 L390.45,739.8 L390.90,745.0 L391.35,745.1 L391.80,745.5 L392.25,740.3 L392.70,740.1 L393.15,744.3 L393.60,744.4 L394.05,740.9 L394.50,740.0 L394.95,740.1 L395.40,744.3 L395.85,745.6 L396.30,745.0 L396.75,740.7 L397.20,745.0 L397.65,740.5 L398.10,745.6 L398.55,744.7 L399.00,740.6 L399.45,745.0 L399.90,740.3 L400.35,740.6 L400.80,752.2 L401.25,745.6 L401.70,749.9 L402.15,744.1 L402.60,744.8 L403.05,740.0 L403.50,748.5 L403.95,744.0 L404.40,740.0 L404.85,739.2 L405.30,743.8 L405.75,739.4 L406.20,739.2 L406.65,739.1 L407.10,743.3 L407.55,738.5 L408.00,743.3 L408.45,738.9 L408.90,738.1 L409.35,742.5 L409.80,738.3 L410.25,738.2 L410.70,738.0 L411.15,741.8 L411.60,737.4 L412.05,738.1 L412.50,742.4 L412.95,741.4 L413.40,747.7 L413.85,737.6 L414.30,736.8 L414.75,746.3 L415.20,740.9 L415.65,740.7 L416.10,736.5 L416.55,736.7 L417.00,736.2 L417.45,740.8 L417.90,741.0 L418.35,740.8 L418.80,741.1 L419.25,736.1 L419.70,736.0 L420.15,740.9 L420.60,736.0 L421.05,741.7 L421.50,740.7 L421.95,741.1 L422.40,742.5 L422.85,738.3 L423.30,742.4 L423.75,738.5 L424.20,743.8 L424.65,739.5 L425.10,741.2 L425.55,741.9 L426.00,742.9 L426.45,743.2 L426.90,749.1 L427.35,749.2 L427.80,747.5 L428.25,742.7 L428.70,747.5 L429.15,745.7 L429.60,741.6 L430.05,745.0 L430.50,739.7 L430.95,743.9 L431.40,743.7 L431.85,738.2 L432.30,738.2 L432.75,741.1 L433.20,736.6 L433.65,736.2 L434.10,735.6 L434.55,735.8 L435.00,735.2 L435.45,736.2 L435.90,735.3 L436.35,739.9 L436.80,735.7 L437.25,735.8 L437.70,740.9 L438.15,741.2 L438.60,740.7 L439.05,740.7 L439.50,740.5 L439.95,735.5 L440.40,740.8 L440.85,740.5 L441.30,735.9 L441.75,740.1 L442.20,739.9 L442.65,739.9 L443.10,735.3 L443.55,736.0 L444.00,735.3 L444.45,735.1 L444.90,735.0 L445.35,735.7 L445.80,735.3 L446.25,739.5 L446.70,734.8 L447.15,735.0 L447.60,739.8 L448.05,739.5 L448.50,739.8 L448.95,734.8 L449.40,740.4 L449.85,735.3 L450.30,735.4 L450.75,735.0 L451.20,739.2 L451.65,734.4 L452.10,734.7 L452.55,739.0 L453.00,734.5 L453.45,739.9 L453.90,738.9 L454.35,740.0 L454.80,738.6 L455.25,739.8 L455.70,734.3 L456.15,734.7 L456.60,739.4 L457.05,738.7 L457.50,734.8 L457.95,738.9 L458.40,738.8 L458.85,734.4 L459.30,734.5 L459.75,734.4 L460.20,738.5 L460.65,733.8 L461.10,738.9 L461.55,740.0 L462.00,739.1 L462.45,733.8 L462.90,733.8 L463.35,738.1 L463.80,738.5 L464.25,738.8 L464.70,738.8 L465.15,738.3 L465.60,738.2 L466.05,738.9 L466.50,738.2 L466.95,739.2 L467.40,733.7 L467.85,739.1 L468.30,733.3 L468.75,733.9 L469.20,738.1 L469.65,740.6 L470.10,737.6 L470.55,733.4 L471.00,733.8 L471.45,737.9 L471.90,738.2 L472.35,733.6 L472.80,739.2 L473.25,733.6 L473.70,738.2 L474.15,742.9 L474.60,738.5 L475.05,738.7 L475.50,734.7 L475.95,734.5 L476.40,734.5 L476.85,734.7 L477.30,734.5 L477.75,734.9 L478.20,739.3 L478.65,734.3 L479.10,734.5 L479.55,734.4 L480.00,739.5 L480.45,735.2 L480.90,734.9 L481.35,735.2 L481.80,739.1 L482.25,740.0 L482.70,734.8 L483.15,735.4 L483.60,735.2 L484.05,739.6 L484.50,740.3 L484.95,735.6 L485.40,735.5 L485.85,739.4 L486.30,740.6 L486.75,734.9 L487.20,735.9 L487.65,735.9 L488.10,735.7 L488.55,735.2 L489.00,739.5 L489.45,736.1 L489.90,740.8 L490.35,741.3 L490.80,736.1 L491.25,739.7 L491.70,740.0 L492.15,735.5 L492.60,736.5 L493.05,736.4 L493.50,736.0 L493.95,736.0 L494.40,736.3 L494.85,736.4 L495.30,740.2 L495.75,736.3 L496.20,740.6 L496.65,736.8 L497.10,741.3 L497.55,736.1 L498.00,736.1 L498.45,736.6 L498.90,736.6 L499.35,736.1 L499.80,741.5 L500.25,741.3 L500.70,741.9 L501.15,741.5 L501.60,736.4 L502.05,737.1 L502.50,736.5 L502.95,736.2 L503.40,741.9 L503.85,741.7 L504.30,736.6 L504.75,736.2 L505.20,736.1 L505.65,741.4 L506.10,740.3 L506.55,740.7 L507.00,741.0 L507.45,736.8 L507.90,736.6 L508.35,740.8 L508.80,741.6 L509.25,736.4 L509.70,740.6 L510.15,740.6 L510.60,740.9 L511.05,740.4 L511.50,740.7 L511.95,736.2 L512.40,736.5 L512.85,736.3 L513.30,740.5 L513.75,735.7 L514.20,740.6 L514.65,740.6 L515.10,740.1 L515.55,736.2 L516.00,736.0 L516.45,741.0 L516.90,739.7 L517.35,736.2 L517.80,739.8 L518.25,735.5 L518.70,735.6 L519.15,740.3 L519.60,735.3 L520.05,736.2 L520.50,740.2 L520.95,736.0 L521.40,739.7 L521.85,740.0 L522.30,739.8 L522.75,735.5 L523.20,735.1 L523.65,735.7 L524.10,735.3 L524.55,739.8 L525.00,735.3 L525.45,739.5 L525.90,740.6 L526.35,735.5 L526.80,740.3 L527.25,735.1 L527.70,735.4 L528.15,739.7 L528.60,735.6 L529.05,739.8 L529.50,735.5 L529.95,739.5 L530.40,745.7 L530.85,735.6 L531.30,735.0 L531.75,739.8 L532.20,739.9 L532.65,740.3 L533.10,735.5 L533.55,735.3 L534.00,739.8 L534.45,735.7 L534.90,735.3 L535.35,740.4 L535.80,740.2 L536.25,734.8 L536.70,739.9 L537.15,740.2 L537.60,735.0 L538.05,735.6 L538.50,734.8 L538.95,739.9 L539.40,735.4 L539.85,739.7 L540.30,735.4 L540.75,735.3 L541.20,746.2 L541.65,739.2 L542.10,735.2 L542.55,735.6 L543.00,734.9 L543.45,734.9 L543.90,739.7 L544.35,739.5 L544.80,734.9 L545.25,740.1 L545.70,739.2 L546.15,734.6 L546.60,739.4 L547.05,735.0 L547.50,739.4 L547.95,739.1 L548.40,739.6 L548.85,734.8 L549.30,739.4 L549.75,739.2 L550.20,735.2 L550.65,735.1 L551.10,739.6 L551.55,735.3 L552.00,735.3 L552.45,734.8 L552.90,738.8 L553.35,738.8 L553.80,738.9 L554.25,739.5 L554.70,739.4 L555.15,739.6 L555.60,734.5 L556.05,738.8 L556.50,738.9 L556.95,734.4 L557.40,740.0 L557.85,734.9 L558.30,735.1 L558.75,738.8 L559.20,734.9 L559.65,735.0 L560.10,734.4 L560.55,739.0 L561.00,738.8 L561.45,739.1 L561.90,738.9 L562.35,740.1 L562.80,734.4 L563.25,735.1 L563.70,735.0 L564.15,735.0 L564.60,739.5 L565.05,739.1 L565.50,739.1 L565.95,740.4 L566.40,739.8 L566.85,735.1 L567.30,739.8 L567.75,739.2 L568.20,735.7 L568.65,740.0 L569.10,735.0 L569.55,735.8 L570.00,739.6 L570.45,739.3 L570.90,740.8 L571.35,736.0 L571.80,739.5 L572.25,735.6 L572.70,735.9 L573.15,736.0 L573.60,735.3 L574.05,739.7 L574.50,740.8 L574.95,740.3 L575.40,735.9 L575.85,736.0 L576.30,736.0 L576.75,735.8 L577.20,740.0 L577.65,736.5 L578.10,736.4 L578.55,740.6 L579.00,735.7 L579.45,740.1 L579.90,736.2 L580.35,736.2 L580.80,736.3 L581.25,740.6 L581.70,736.2 L582.15,736.0 L582.60,736.8 L583.05,741.6 L583.50,736.9 L583.95,736.8 L584.40,741.4 L584.85,736.8 L585.30,736.4 L585.75,736.5 L586.20,740.9 L586.65,740.6 L587.10,740.9 L587.55,741.7 L588.00,740.7 L588.45,736.9 L588.90,742.5 L589.35,741.7 L589.80,741.2 L590.25,741.5 L590.70,740.8 L591.15,741.5 L591.60,736.7 L592.05,737.3 L592.50,741.2 L592.95,736.8 L593.40,736.9 L593.85,737.7 L594.30,748.1 L594.75,737.3 L595.20,742.5 L595.65,742.1 L596.10,737.5 L596.55,742.4 L597.00,737.7 L597.45,737.2 L597.90,747.6 L598.35,741.6 L598.80,742.8 L599.25,742.6 L599.70,742.7 L600.15,742.2 L600.60,742.8 L601.05,742.2 L601.50,747.0 L601.95,742.1 L602.40,749.0 L602.85,738.6 L603.30,738.1 L603.75,738.2 L604.20,738.9 L604.65,743.5 L605.10,739.0 L605.55,743.6 L606.00,743.9 L606.45,738.6 L606.90,744.1 L607.35,739.3 L607.80,744.2 L608.25,739.3 L608.70,739.1 L609.15,744.0 L609.60,744.1 L610.05,739.4 L610.50,740.1 L610.95,744.1 L611.40,739.8 L611.85,744.5 L612.30,745.2 L612.75,740.4 L613.20,740.7 L613.65,740.2 L614.10,748.4 L614.55,741.0 L615.00,745.8 L615.45,740.8 L615.90,749.7 L616.35,747.6 L616.80,745.1 L617.25,745.0 L617.70,741.7 L618.15,741.6 L618.60,741.3 L619.05,741.6 L619.50,746.2 L619.95,742.1 L620.40,746.5 L620.85,741.8 L621.30,742.2 L621.75,741.9 L622.20,746.1 L622.65,746.5 L623.10,746.2 L623.55,742.2 L624.00,742.0 L624.45,746.3 L624.90,742.0 L625.35,746.6 L625.80,745.6 L626.25,741.3 L626.70,753.2 L627.15,741.8 L627.60,745.6 L628.05,741.9 L628.50,745.9 L628.95,745.9 L629.40,746.1 L629.85,751.5 L630.30,746.5 L630.75,742.2 L631.20,746.5 L631.65,741.4 L632.10,746.7 L632.55,746.0 L633.00,741.7 L633.45,745.7 L633.90,745.8 L634.35,741.3 L634.80,741.6 L635.25,753.7 L635.70,741.5 L636.15,745.8 L636.60,741.6 L637.05,741.5 L637.50,741.6 L637.95,748.9 L638.40,742.1 L638.85,742.0 L639.30,746.7 L639.75,741.4 L640.20,746.2 L640.65,746.5 L641.10,745.9 L641.55,742.1 L642.00,745.9 L642.45,745.9 L642.90,745.6 L643.35,746.3 L643.80,742.1 L644.25,741.4 L644.70,741.7 L645.15,746.5 L645.60,742.0 L646.05,741.5 L646.50,747.0 L646.95,746.5 L647.40,746.1 L647.85,746.6 L648.30,741.6 L648.75,746.0 L649.20,742.1 L649.65,746.3 L650.10,746.8 L650.55,741.5 L651.00,741.5 L651.45,746.6 L651.90,746.1 L652.35,741.4 L652.80,741.6 L653.25,746.3 L653.70,741.3 L654.15,745.6 L654.60,746.2 L655.05,746.0 L655.50,746.0 L655.95,741.0 L656.40,745.5 L656.85,740.2 L657.30,745.6 L657.75,740.3 L658.20,740.1 L658.65,745.7 L659.10,744.7 L659.55,744.2 L660.00,744.5 L660.45,740.3 L660.90,739.8 L661.35,739.9 L661.80,744.9 L662.25,740.2 L662.70,739.5 L663.15,744.0 L663.60,739.7 L664.05,739.9 L664.50,739.9 L664.95,744.1 L665.40,739.7 L665.85,739.3 L666.30,738.8 L666.75,744.1 L667.20,743.5 L667.65,743.7 L668.10,739.4 L668.55,749.8 L669.00,746.5 L669.45,744.6 L669.90,738.3 L670.35,738.9 L670.80,743.2 L671.25,738.4 L671.70,738.5 L672.15,738.9 L672.60,743.2 L673.05,738.9 L673.50,738.5 L673.95,743.6 L674.40,749.2 L674.85,743.9 L675.30,743.6 L675.75,738.4 L676.20,739.1 L676.65,743.4 L677.10,738.7 L677.55,739.8 L678.00,747.9 L678.45,740.9 L678.90,742.4 L679.35,747.3 L679.80,743.2 L680.25,744.7 L680.70,745.7 L681.15,750.8 L681.60,746.6 L682.05,746.4 L682.50,751.8 L682.95,747.4 L683.40,746.9 L683.85,750.4 L684.30,752.2 L684.75,746.8 L685.20,746.5 L685.65,740.3 L686.10,740.2 L686.55,739.0 L687.00,743.9 L687.45,737.8 L687.90,742.2 L688.35,736.8 L688.80,741.5 L689.25,735.9 L689.70,734.9 L690.15,739.1 L690.60,734.8 L691.05,734.4 L691.50,734.8 L691.95,739.6 L692.40,734.3 L692.85,738.6 L693.30,734.6 L693.75,739.6 L694.20,734.8 L694.65,739.2 L695.10,735.1 L695.55,738.6 L696.00,735.2 L696.45,734.6 L696.90,739.7 L697.35,739.6 L697.80,734.3 L698.25,745.6 L698.70,734.2 L699.15,735.1 L699.60,734.9 L700.05,739.5 L700.50,738.9 L700.95,734.2 L701.40,738.7 L701.85,745.0 L702.30,735.0 L702.75,734.7 L703.20,735.0 L703.65,739.9 L704.10,735.1 L704.55,739.7 L705.00,739.4 L705.45,739.7 L705.90,734.3 L706.35,738.9 L706.80,734.2 L707.25,738.5 L707.70,739.7 L708.15,734.3 L708.60,738.8 L709.05,734.3 L709.50,743.8 L709.95,734.3 L710.40,739.8 L710.85,738.7 L711.30,734.5 L711.75,738.7 L712.20,740.0 L712.65,738.5 L713.10,734.3 L713.55,739.4 L714.00,739.2 L714.45,734.8 L714.90,739.9 L715.35,739.7 L715.80,739.8 L716.25,738.5 L716.70,739.8 L717.15,735.1 L717.60,735.1 L718.05,734.9 L718.50,734.5 L718.95,734.5 L719.40,734.6 L719.85,744.6 L720.30,739.7 L720.75,740.0 L721.20,739.0 L721.65,734.7 L722.10,734.6 L722.55,740.1 L723.00,735.2 L723.45,740.1 L723.90,739.6 L724.35,735.3 L724.80,735.1 L725.25,735.1 L725.70,741.5 L726.15,739.9 L726.60,740.3 L727.05,735.6 L727.50,740.5 L727.95,734.9 L728.40,735.7 L728.85,735.1 L729.30,740.6 L729.75,735.3 L730.20,740.2 L730.65,740.3 L731.10,735.2 L731.55,735.7 L732.00,735.3 L732.45,745.3 L732.90,740.3 L733.35,740.4 L733.80,735.2 L734.25,735.2 L734.70,735.3 L735.15,735.7 L735.60,745.9 L736.05,736.0 L736.50,735.4 L736.95,735.7 L737.40,740.3 L737.85,739.8 L738.30,740.2 L738.75,739.8 L739.20,740.1 L739.65,741.0 L740.10,740.3 L740.55,735.8 L741.00,740.1 L741.45,740.8 L741.90,740.2 L742.35,735.8 L742.80,744.2 L743.25,740.9 L743.70,735.8 L744.15,736.7 L744.60,736.8 L745.05,736.6 L745.50,736.7 L745.95,736.3 L746.40,740.4 L746.85,736.8 L747.30,736.4 L747.75,740.7 L748.20,736.3 L748.65,736.5 L749.10,741.1 L749.55,740.5 L750.00,741.8 L750.45,736.2 L750.90,736.3 L751.35,737.0 L751.80,736.4 L752.25,736.4 L752.70,736.7 L753.15,736.4 L753.60,736.8 L754.05,741.5 L754.50,736.6 L754.95,741.5 L755.40,742.1 L755.85,740.9 L756.30,741.5 L756.75,736.6 L757.20,741.1 L757.65,736.7 L758.10,741.5 L758.55,740.9 L759.00,736.8 L759.45,737.2 L759.90,736.6 L760.35,745.7 L760.80,736.6 L761.25,741.6 L761.70,737.1 L762.15,741.7 L762.60,737.1 L763.05,741.9 L763.50,737.5 L763.95,742.1 L764.40,741.5 L764.85,741.3 L765.30,737.3 L765.75,741.1 L766.20,736.8 L766.65,736.9 L767.10,737.5 L767.55,742.5 L768.00,737.5 L768.45,737.8 L768.90,737.3 L769.35,742.6 L769.80,737.9 L770.25,741.5 L770.70,741.5 L771.15,745.9 L771.60,737.9 L772.05,737.3 L772.50,737.6 L772.95,737.3 L773.40,737.8 L773.85,737.6 L774.30,737.5 L774.75,742.4 L775.20,737.3 L775.65,738.0 L776.10,737.2 L776.55,742.3 L777.00,741.5 L777.45,737.3 L777.90,742.1 L778.35,738.0 L778.80,742.8 L779.25,744.9 L779.70,742.1 L780.15,738.1 L780.60,737.2 L781.05,737.4 L781.50,748.9 L781.95,737.5 L782.40,742.5 L782.85,742.0 L783.30,737.1 L783.75,742.0 L784.20,742.4 L784.65,743.9 L785.10,737.6 L785.55,741.2 L786.00,741.3 L786.45,736.9 L786.90,741.8 L787.35,737.2 L787.80,741.4 L788.25,741.9 L788.70,736.8 L789.15,741.6 L789.60,740.8 L790.05,747.5 L790.50,736.6 L790.95,743.4 L791.40,737.0 L791.85,740.7 L792.30,740.8 L792.75,741.4 L793.20,736.1 L793.65,736.1 L794.10,735.9 L794.55,736.2 L795.00,736.3 L795.45,740.8 L795.90,736.3 L796.35,735.7 L796.80,735.5 L797.25,740.0 L797.70,736.4 L798.15,740.9 L798.60,740.6 L799.05,741.0 L799.50,736.0 L799.95,735.5 L800.40,740.4 L800.85,740.9 L801.30,739.9 L801.75,735.9 L802.20,740.1 L802.65,735.4 L803.10,736.1 L803.55,735.7 L804.00,736.2 L804.45,741.4 L804.90,736.5 L805.35,742.4 L805.80,736.1 L806.25,736.0 L806.70,735.9 L807.15,735.8 L807.60,735.8 L808.05,741.1 L808.50,736.6 L808.95,740.6 L809.40,736.0 L809.85,741.0 L810.30,736.0 L810.75,740.8 L811.20,740.6 L811.65,741.5 L812.10,736.6 L812.55,736.7 L813.00,741.6 L813.45,736.2 L813.90,741.3 L814.35,736.3 L814.80,740.6 L815.25,740.9 L815.70,736.7 L816.15,741.7 L816.60,737.0 L817.05,736.6 L817.50,741.7 L817.95,742.0 L818.40,736.7 L818.85,741.1 L819.30,736.7 L819.75,742.1 L820.20,742.3 L820.65,741.3 L821.10,737.3 L821.55,737.2 L822.00,736.7 L822.45,741.2 L822.90,742.3 L823.35,737.0 L823.80,737.3 L824.25,741.7 L824.70,741.9 L825.15,741.3 L825.60,737.3 L826.05,737.2 L826.50,741.6 L826.95,737.5 L827.40,742.5 L827.85,737.5 L828.30,742.8 L828.75,741.6 L829.20,737.8 L829.65,737.2 L830.10,749.4 L830.55,737.7 L831.00,742.0 L831.45,738.1 L831.90,742.3 L832.35,737.8 L832.80,738.4 L833.25,737.8 L833.70,742.1 L834.15,737.7 L834.60,738.2 L835.05,742.3 L835.50,738.5 L835.95,738.1 L836.40,738.1 L836.85,744.5 L837.30,738.7 L837.75,743.6 L838.20,739.0 L838.65,742.8 L839.10,738.8 L839.55,742.6 L840.00,739.2 L840.45,739.1 L840.90,738.5 L841.35,738.8 L841.80,745.2 L842.25,743.2 L842.70,739.2 L843.15,738.7 L843.60,739.4 L844.05,743.8 L844.50,739.4 L844.95,744.3 L845.40,746.8 L845.85,744.3 L846.30,739.2 L846.75,739.2 L847.20,739.0 L847.65,739.9 L848.10,739.6 L848.55,744.5 L849.00,740.0 L849.45,744.9 L849.90,744.6 L850.35,743.9 L850.80,744.2 L851.25,743.8 L851.70,744.2 L852.15,744.2 L852.60,745.0 L853.05,744.0 L853.50,745.0 L853.95,744.9 L854.40,740.5 L854.85,744.7 L855.30,740.5 L855.75,745.4 L856.20,740.2 L856.65,740.0 L857.10,739.9 L857.55,744.6 L858.00,740.1 L858.45,744.6 L858.90,740.5 L859.35,745.9 L859.80,740.8 L860.25,745.2 L860.70,745.7 L861.15,741.2 L861.60,744.8 L862.05,745.9 L862.50,745.5 L862.95,741.4 L863.40,745.2 L863.85,740.9 L864.30,751.3 L864.75,741.6 L865.20,741.3 L865.65,741.5 L866.10,740.9 L866.55,746.4 L867.00,745.7 L867.45,741.7 L867.90,745.6 L868.35,746.8 L868.80,741.5 L869.25,746.8 L869.70,741.5 L870.15,741.9 L870.60,741.7 L871.05,746.5 L871.50,742.1 L871.95,750.9 L872.40,745.7 L872.85,746.2 L873.30,746.7 L873.75,742.0 L874.20,741.1 L874.65,746.7 L875.10,746.8 L875.55,746.7 L876.00,745.5 L876.45,746.5 L876.90,741.6 L877.35,741.2 L877.80,741.5 L878.25,741.0 L878.70,741.3 L879.15,746.3 L879.60,741.1 L880.05,745.4 L880.50,746.5 L880.95,741.4 L881.40,746.2 L881.85,746.2 L882.30,741.6 L882.75,745.2 L883.20,745.7 L883.65,740.8 L884.10,746.0 L884.55,741.2 L885.00,746.5 L885.45,741.5 L885.90,740.9 L886.35,741.1 L886.80,745.4 L887.25,740.8 L887.70,740.8 L888.15,741.1 L888.60,741.1 L889.05,741.5 L889.50,741.5 L889.95,740.7 L890.40,745.0 L890.85,740.6 L891.30,746.2 L891.75,740.8 L892.20,740.8 L892.65,745.3 L893.10,741.3 L893.55,744.7 L894.00,745.8 L894.45,741.0 L894.90,745.3 L895.35,740.7 L895.80,745.6 L896.25,746.0 L896.70,740.7 L897.15,745.8 L897.60,745.6 L898.05,741.2 L898.50,745.2 L898.95,740.4 L899.40,745.7 L899.85,740.5 L900.30,740.7 L900.75,741.0 L901.20,740.6 L901.65,745.2 L902.10,740.2 L902.55,740.4 L903.00,744.4 L903.45,740.1 L903.90,740.5 L904.35,744.3 L904.80,740.3 L905.25,740.1 L905.70,739.5 L906.15,740.1 L906.60,739.4 L907.05,739.4 L907.50,744.5 L907.95,744.7 L908.40,744.6 L908.85,739.8 L909.30,739.0 L909.75,744.3 L910.20,738.8 L910.65,744.0 L911.10,744.3 L911.55,738.5 L912.00,738.4 L912.45,743.6 L912.90,738.4 L913.35,738.8 L913.80,743.9 L914.25,739.0 L914.70,738.4 L915.15,738.2 L915.60,750.6 L916.05,742.4 L916.50,737.9 L916.95,738.4 L917.40,738.1 L917.85,741.9 L918.30,738.2 L918.75,742.4 L919.20,742.5 L919.65,737.6 L920.10,742.8 L920.55,742.2 L921.00,737.2 L921.45,737.6 L921.90,737.6 L922.35,741.8 L922.80,737.4 L923.25,737.2 L923.70,741.9 L924.15,737.3 L924.60,748.6" fill="none" stroke="#f000f0" stroke-width="1"/>
<polygon fill="#f000f0" points="174,737.8 200,735.8 220,733.8 240,733.8 260,735.8 290,733.8 320,733.8 350,736.8 380,739.8 400,740.8 420,735.8 424,738.8 427,744.8 430,740.8 434,735.8 440,735.8 470,733.8 500,736.8 520,735.8 560,734.8 600,737.8 620,741.8 650,741.8 670,738.8 677,738.8 681,745.8 683,747.8 685,741.8 690,734.8 720,734.8 750,736.8 780,737.8 800,735.8 830,737.8 870,741.8 900,740.8 920,737.8 925,736.8 925,740.8 920,741.8 900,744.8 870,745.8 830,741.8 800,739.8 780,741.8 750,740.8 720,738.8 690,738.8 685,745.8 683,751.8 681,749.8 677,742.8 670,742.8 650,745.8 620,745.8 600,741.8 560,738.8 520,739.8 500,740.8 470,737.8 440,739.8 434,739.8 430,744.8 427,748.8 424,742.8 420,739.8 400,744.8 380,743.8 350,740.8 320,737.8 290,737.8 260,739.8 240,737.8 220,737.8 200,739.8 174,741.8"/>
<g stroke="#f020f0" stroke-width="1.3"><line x1="427.0" y1="747.0" x2="427.0" y2="752.0"/><line x1="429.0" y1="744.3" x2="429.0" y2="750.0"/><line x1="682.0" y1="749.0" x2="682.0" y2="758.0"/><line x1="684.0" y1="747.0" x2="684.0" y2="755.0"/><line x1="870.0" y1="744.0" x2="870.0" y2="757.0"/><line x1="192.0" y1="738.6" x2="192.0" y2="750.0"/><line x1="900.0" y1="743.0" x2="900.0" y2="748.0"/><line x1="920.0" y1="740.0" x2="920.0" y2="750.0"/><line x1="690.0" y1="737.0" x2="690.0" y2="748.0"/><line x1="620.0" y1="744.0" x2="620.0" y2="750.0"/></g>
<line x1="174.5" y1="351" x2="174.5" y2="726" stroke="#33339a" stroke-width="1.3" />
<line x1="174" y1="351.5" x2="925" y2="351.5" stroke="#33339a" stroke-width="1.3" />
<line x1="682.3" y1="351" x2="682.3" y2="501" stroke="#1c1c8c" stroke-width="2" />
<rect x="207.3" y="200.5" width="37.69999999999999" height="150.5" fill="#0000f4" />
<rect x="259.7" y="200.5" width="30.600000000000023" height="150.5" fill="#0000f4" />
<rect x="291" y="200.5" width="10" height="150.5" fill="#0000f4" />
<rect x="303" y="200.5" width="2.6999999999999886" height="150.5" fill="#0000f4" />
<rect x="308.3" y="200.5" width="6.0" height="150.5" fill="#0000f4" />
<rect x="317" y="200.5" width="4.699999999999989" height="150.5" fill="#0000f4" />
<rect x="325" y="200.5" width="18" height="150.5" fill="#0000f4" />
<rect x="419.7" y="200.5" width="3.3000000000000114" height="150.5" fill="#0000f4" />
<rect x="456.7" y="200.5" width="30.05000000000001" height="150.5" fill="#0000f4" />
<rect x="549.7" y="200.5" width="5.599999999999909" height="150.5" fill="#0000f4" />
<rect x="560" y="200.5" width="4" height="150.5" fill="#0000f4" />
<rect x="570.5" y="200.5" width="2.7999999999999545" height="150.5" fill="#0000f4" />
<rect x="696" y="200.5" width="32.700000000000045" height="150.5" fill="#0000f4" />
<rect x="689.7" y="200.5" width="2.2999999999999545" height="150.5" fill="#0000f4" />
<line x1="246.9" y1="200.5" x2="246.9" y2="351" stroke="#2323d8" stroke-width="1.4" />
<line x1="257.6" y1="200.5" x2="257.6" y2="351" stroke="#6b6bd8" stroke-width="1.4" />
<line x1="417.5" y1="200.5" x2="417.5" y2="351" stroke="#4a4ae0" stroke-width="1.4" />
<line x1="449" y1="200.5" x2="449" y2="351" stroke="#5656c8" stroke-width="1.4" />
<line x1="456" y1="200.5" x2="456" y2="351" stroke="#3535d8" stroke-width="1.4" />
<line x1="569.5" y1="200.5" x2="569.5" y2="351" stroke="#5a5ae0" stroke-width="1.4" />
<line x1="687.8" y1="200.5" x2="687.8" y2="351" stroke="#1010e8" stroke-width="1.4" />
<line x1="693.5" y1="200.5" x2="693.5" y2="351" stroke="#1010e8" stroke-width="1.4" />
<line x1="799.8" y1="200.5" x2="799.8" y2="351" stroke="#404090" stroke-width="1.4" />
<line x1="808.3" y1="200.5" x2="808.3" y2="351" stroke="#404090" stroke-width="1.4" />
<line x1="174.5" y1="726" x2="174.5" y2="801" stroke="#d84040" stroke-width="1.5" />
<rect x="1064" y="89" width="129" height="707" fill="#efefef" stroke="#d6d6d6" stroke-width="1"/>
<text x="1070.5" y="105" font-family="Liberation Sans" font-size="10" font-weight="normal" font-style="normal" fill="#262626" text-anchor="start" textLength="39" lengthAdjust="spacingAndGlyphs" stroke="#262626" stroke-width="0.35" >Frequency:</text>
<text x="1126.7" y="105" font-family="Liberation Sans" font-size="10" font-weight="bold" font-style="normal" fill="#147a16" text-anchor="start" textLength="56" lengthAdjust="spacingAndGlyphs" stroke="#147a16" stroke-width="0.2" >10759,858 MHz</text>
<text x="1070.5" y="142.5" font-family="Liberation Sans" font-size="10" font-weight="normal" font-style="normal" fill="#262626" text-anchor="start" textLength="45.5" lengthAdjust="spacingAndGlyphs" stroke="#262626" stroke-width="0.35" >Polarization:</text>
<text x="1126.7" y="142.5" font-family="Liberation Sans" font-size="10" font-weight="bold" font-style="normal" fill="#147a16" text-anchor="start" textLength="26" lengthAdjust="spacingAndGlyphs" stroke="#147a16" stroke-width="0.2" >Vertical</text>
<text x="1070.5" y="180" font-family="Liberation Sans" font-size="10" font-weight="normal" font-style="normal" fill="#262626" text-anchor="start" textLength="46" lengthAdjust="spacingAndGlyphs" stroke="#262626" stroke-width="0.35" >Symbol Rate:</text>
<text x="1126.7" y="180" font-family="Liberation Sans" font-size="10" font-weight="bold" font-style="normal" fill="#147a16" text-anchor="start" textLength="55" lengthAdjust="spacingAndGlyphs" stroke="#147a16" stroke-width="0.2" >27500,018 KS/s</text>
<text x="1070.5" y="217.5" font-family="Liberation Sans" font-size="10" font-weight="normal" font-style="normal" fill="#262626" text-anchor="start" textLength="34.5" lengthAdjust="spacingAndGlyphs" stroke="#262626" stroke-width="0.35" >Standard:</text>
<text x="1126.7" y="217.5" font-family="Liberation Sans" font-size="10" font-weight="bold" font-style="normal" fill="#147a16" text-anchor="start" textLength="22" lengthAdjust="spacingAndGlyphs" stroke="#147a16" stroke-width="0.2" >DVB-S</text>
<text x="1070.5" y="255" font-family="Liberation Sans" font-size="10" font-weight="normal" font-style="normal" fill="#262626" text-anchor="start" textLength="45" lengthAdjust="spacingAndGlyphs" stroke="#262626" stroke-width="0.35" >Modulation:</text>
<text x="1126.7" y="255" font-family="Liberation Sans" font-size="10" font-weight="bold" font-style="normal" fill="#147a16" text-anchor="start" textLength="20" lengthAdjust="spacingAndGlyphs" stroke="#147a16" stroke-width="0.2" >QPSK</text>
<text x="1070.5" y="292.7" font-family="Liberation Sans" font-size="10" font-weight="normal" font-style="normal" fill="#262626" text-anchor="start" textLength="15.5" lengthAdjust="spacingAndGlyphs" stroke="#262626" stroke-width="0.35" >FEC:</text>
<text x="1126.7" y="292.7" font-family="Liberation Sans" font-size="10" font-weight="bold" font-style="normal" fill="#147a16" text-anchor="start" textLength="12" lengthAdjust="spacingAndGlyphs" stroke="#147a16" stroke-width="0.2" >3/4</text>
<text x="1070.5" y="330.4" font-family="Liberation Sans" font-size="10" font-weight="normal" font-style="normal" fill="#262626" text-anchor="start" textLength="27.5" lengthAdjust="spacingAndGlyphs" stroke="#262626" stroke-width="0.35" >RollOff:</text>
<text x="1126.7" y="330.4" font-family="Liberation Sans" font-size="10" font-weight="bold" font-style="normal" fill="#147a16" text-anchor="start" textLength="14.5" lengthAdjust="spacingAndGlyphs" stroke="#147a16" stroke-width="0.2" >0.35</text>
<text x="1070.5" y="367.8" font-family="Liberation Sans" font-size="10" font-weight="normal" font-style="normal" fill="#262626" text-anchor="start" textLength="17.5" lengthAdjust="spacingAndGlyphs" stroke="#262626" stroke-width="0.35" >Pilot:</text>
<text x="1126.7" y="367.8" font-family="Liberation Sans" font-size="10" font-weight="bold" font-style="normal" fill="#147a16" text-anchor="start" textLength="18.5" lengthAdjust="spacingAndGlyphs" stroke="#147a16" stroke-width="0.2" >Auto</text>
<text x="1070.5" y="405.5" font-family="Liberation Sans" font-size="10" font-weight="normal" font-style="normal" fill="#262626" text-anchor="start" textLength="35.5" lengthAdjust="spacingAndGlyphs" stroke="#262626" stroke-width="0.35" >Spectrum:</text>
<text x="1126.7" y="405.5" font-family="Liberation Sans" font-size="10" font-weight="bold" font-style="normal" fill="#147a16" text-anchor="start" textLength="30.5" lengthAdjust="spacingAndGlyphs" stroke="#147a16" stroke-width="0.2" >Inverted</text>
<text x="1070.5" y="442.6" font-family="Liberation Sans" font-size="10" font-weight="normal" font-style="normal" fill="#262626" text-anchor="start" textLength="41.5" lengthAdjust="spacingAndGlyphs" stroke="#262626" stroke-width="0.35" >Frame Type:</text>
<text x="1126.7" y="442.6" font-family="Liberation Sans" font-size="10" font-weight="bold" font-style="normal" fill="#147a16" text-anchor="start" textLength="44.5" lengthAdjust="spacingAndGlyphs" stroke="#147a16" stroke-width="0.2" >Long Frame</text>
<text x="1070.5" y="481.7" font-family="Liberation Sans" font-size="10" font-weight="normal" font-style="normal" fill="#262626" text-anchor="start" textLength="45" lengthAdjust="spacingAndGlyphs" stroke="#262626" stroke-width="0.35" >Code Mode:</text>
<text x="1126.7" y="481.7" font-family="Liberation Sans" font-size="10" font-weight="bold" font-style="normal" fill="#147a16" text-anchor="start" textLength="17.5" lengthAdjust="spacingAndGlyphs" stroke="#147a16" stroke-width="0.2" >CCM</text>
<text x="1070.5" y="519" font-family="Liberation Sans" font-size="10" font-weight="normal" font-style="normal" fill="#262626" text-anchor="start" textLength="45" lengthAdjust="spacingAndGlyphs" stroke="#262626" stroke-width="0.35" >Stream type:</text>
<text x="1126.7" y="519" font-family="Liberation Sans" font-size="10" font-weight="bold" font-style="normal" fill="#147a16" text-anchor="start" textLength="35.5" lengthAdjust="spacingAndGlyphs" stroke="#147a16" stroke-width="0.2" >Transport</text>
<text x="1070.5" y="556" font-family="Liberation Sans" font-size="10" font-weight="normal" font-style="normal" fill="#262626" text-anchor="start" textLength="16.5" lengthAdjust="spacingAndGlyphs" stroke="#262626" stroke-width="0.35" >ISSYI</text>
<text x="1126.7" y="556" font-family="Liberation Sans" font-size="10" font-weight="bold" font-style="normal" fill="#147a16" text-anchor="start" textLength="14.5" lengthAdjust="spacingAndGlyphs" stroke="#147a16" stroke-width="0.2" >OFF</text>
<text x="1070.5" y="594" font-family="Liberation Sans" font-size="10" font-weight="normal" font-style="normal" fill="#262626" text-anchor="start" textLength="18" lengthAdjust="spacingAndGlyphs" stroke="#262626" stroke-width="0.35" >NPD:</text>
<text x="1126.7" y="594" font-family="Liberation Sans" font-size="10" font-weight="bold" font-style="normal" fill="#147a16" text-anchor="start" textLength="14.5" lengthAdjust="spacingAndGlyphs" stroke="#147a16" stroke-width="0.2" >OFF</text>
<text x="1070.5" y="631" font-family="Liberation Sans" font-size="10" font-weight="normal" font-style="normal" fill="#262626" text-anchor="start" textLength="31" lengthAdjust="spacingAndGlyphs" stroke="#262626" stroke-width="0.35" >RF Level:</text>
<text x="1126.7" y="631" font-family="Liberation Sans" font-size="10" font-weight="bold" font-style="normal" fill="#147a16" text-anchor="start" textLength="31" lengthAdjust="spacingAndGlyphs" stroke="#147a16" stroke-width="0.2" >-52 dBm</text>
<text x="1070.5" y="669" font-family="Liberation Sans" font-size="10" font-weight="normal" font-style="normal" fill="#262626" text-anchor="start" textLength="28.5" lengthAdjust="spacingAndGlyphs" stroke="#262626" stroke-width="0.35" >BitRate:</text>
<text x="1126.7" y="669" font-family="Liberation Sans" font-size="10" font-weight="bold" font-style="normal" fill="#147a16" text-anchor="start" textLength="50.5" lengthAdjust="spacingAndGlyphs" stroke="#147a16" stroke-width="0.2" >38,015 Mbit/s</text>
<text x="1070.5" y="706" font-family="Liberation Sans" font-size="10" font-weight="normal" font-style="normal" fill="#262626" text-anchor="start" textLength="49" lengthAdjust="spacingAndGlyphs" stroke="#262626" stroke-width="0.35" >CarrierWidth:</text>
<text x="1126.7" y="706" font-family="Liberation Sans" font-size="10" font-weight="bold" font-style="normal" fill="#147a16" text-anchor="start" textLength="42.5" lengthAdjust="spacingAndGlyphs" stroke="#147a16" stroke-width="0.2" >37,125 MHz</text>
<text x="1070.5" y="761.5" font-family="Liberation Sans" font-size="10.5" font-weight="normal" font-style="normal" fill="#262626" text-anchor="start" textLength="26.5" lengthAdjust="spacingAndGlyphs" stroke="#262626" stroke-width="0.4" >MIS (0):</text>
<rect x="1128" y="750" width="51" height="16" fill="#ffffff" />
<text x="1130" y="761.5" font-family="Liberation Sans" font-size="9.5" font-weight="normal" font-style="normal" fill="#333" text-anchor="start" textLength="22" lengthAdjust="spacingAndGlyphs" >Single</text>
<path d="M1170 756 L1173.5 759.5 L1177 756" stroke="#888" stroke-width="1" fill="none"/>
<rect x="1064.5" y="804" width="127.5" height="21.5" fill="#ffffff" rx="3" stroke="#d0d0d0" stroke-width="1"/>
<rect x="1124" y="808" width="10" height="13" fill="#e0e0e0" stroke="#9a9a9a" stroke-width="0.8"/>
<rect x="1124" y="811" width="10" height="3" fill="#3a6ad0" />
<rect x="6" y="835.3" width="89.5" height="17.100000000000023" fill="#a8a8a8" />
<rect x="7" y="836.3" width="87.5" height="15.100000000000023" fill="url(#gGray)" />
<rect x="7" y="836.3" width="87.5" height="15.100000000000023" fill="url(#gGreen)" />
<text x="8" y="848.1999999999999" font-family="Liberation Sans" font-size="9.8" font-weight="bold" font-style="normal" fill="#111" text-anchor="start" textLength="26" lengthAdjust="spacingAndGlyphs" stroke="#111" stroke-width="0.25" >Present</text>
<rect x="6" y="856.4" width="89.5" height="16.600000000000023" fill="#a8a8a8" />
<rect x="7" y="857.4" width="87.5" height="14.600000000000023" fill="url(#gGray)" />
<rect x="7" y="857.4" width="87.5" height="14.600000000000023" fill="url(#gGreen)" />
<text x="8" y="868.8" font-family="Liberation Sans" font-size="9.8" font-weight="bold" font-style="normal" fill="#111" text-anchor="start" textLength="18" lengthAdjust="spacingAndGlyphs" stroke="#111" stroke-width="0.25" >Lock</text>
<rect x="99" y="835.3" width="498" height="17.100000000000023" fill="#a8a8a8" />
<rect x="100" y="836.3" width="496" height="15.100000000000023" fill="url(#gGray)" />
<rect x="100" y="836.3" width="48" height="15.100000000000023" fill="url(#gPink)" />
<rect x="148" y="836.3" width="155" height="15.100000000000023" fill="url(#gYel)" />
<text x="101" y="848.1999999999999" font-family="Liberation Sans" font-size="9.8" font-weight="bold" font-style="normal" fill="#111" text-anchor="start" textLength="36.5" lengthAdjust="spacingAndGlyphs" stroke="#111" stroke-width="0.25" >Level: 41%</text>
<rect x="99" y="856.4" width="498" height="16.600000000000023" fill="#a8a8a8" />
<rect x="100" y="857.4" width="496" height="14.600000000000023" fill="url(#gGray)" />
<rect x="100" y="857.4" width="48" height="14.600000000000023" fill="url(#gPink)" />
<rect x="148" y="857.4" width="200" height="14.600000000000023" fill="url(#gYel)" />
<rect x="348" y="857.4" width="49" height="14.600000000000023" fill="url(#gGreen)" />
<text x="101" y="868.8" font-family="Liberation Sans" font-size="9.8" font-weight="bold" font-style="normal" fill="#111" text-anchor="start" textLength="44.5" lengthAdjust="spacingAndGlyphs" stroke="#111" stroke-width="0.25" >Quality: 60%</text>
<rect x="600" y="835.3" width="499" height="17.100000000000023" fill="#a8a8a8" />
<rect x="601" y="836.3" width="497" height="15.100000000000023" fill="url(#gGray)" />
<rect x="601" y="836.3" width="107" height="15.100000000000023" fill="url(#gPink)" />
<rect x="708" y="836.3" width="107" height="15.100000000000023" fill="url(#gYel)" />
<text x="602" y="848.1999999999999" font-family="Liberation Sans" font-size="9.8" font-weight="bold" font-style="normal" fill="#111" text-anchor="start" textLength="38.5" lengthAdjust="spacingAndGlyphs" stroke="#111" stroke-width="0.25" >BER: 1,4E-3</text>
<rect x="600" y="856.4" width="499" height="16.600000000000023" fill="#a8a8a8" />
<rect x="601" y="857.4" width="497" height="14.600000000000023" fill="url(#gGray)" />
<rect x="601" y="857.4" width="136" height="14.600000000000023" fill="url(#gPink)" />
<rect x="737" y="857.4" width="72" height="14.600000000000023" fill="url(#gYel)" />
<text x="602" y="868.8" font-family="Liberation Sans" font-size="9.8" font-weight="bold" font-style="normal" fill="#111" text-anchor="start" textLength="128" lengthAdjust="spacingAndGlyphs" stroke="#111" stroke-width="0.25" >SNR: 8,3 dB (Margin: 2,8 dB | Poor)</text>
<rect x="1102" y="835.3" width="90" height="17.100000000000023" fill="#a8a8a8" />
<rect x="1103" y="836.3" width="88" height="15.100000000000023" fill="url(#gGray)" />
<rect x="1103" y="836.3" width="88" height="15.100000000000023" fill="url(#gGreen)" />
<text x="1104" y="848.1999999999999" font-family="Liberation Sans" font-size="9.8" font-weight="bold" font-style="normal" fill="#111" text-anchor="start" textLength="75" lengthAdjust="spacingAndGlyphs" stroke="#111" stroke-width="0.25" >Input (~36,35 Mbps)</text>
<rect x="1102" y="856.4" width="90" height="16.600000000000023" fill="#a8a8a8" />
<rect x="1103" y="857.4" width="88" height="14.600000000000023" fill="url(#gGray)" />
<rect x="1103" y="857.4" width="88" height="14.600000000000023" fill="url(#gGreen)" />
<text x="1104" y="868.8" font-family="Liberation Sans" font-size="9.8" font-weight="bold" font-style="normal" fill="#111" text-anchor="start" textLength="27" lengthAdjust="spacingAndGlyphs" stroke="#111" stroke-width="0.25" >Sync TS</text>
<line x1="0" y1="879.5" x2="1200" y2="879.5" stroke="#dadada" stroke-width="1" />
<text x="144" y="893" font-family="Liberation Sans" font-size="10.5" font-weight="normal" font-style="normal" fill="#111" text-anchor="start" textLength="105" lengthAdjust="spacingAndGlyphs" stroke="#111" stroke-width="0.5" >Locked -&gt; Uptime: 73:09:41</text>
<line x1="392.5" y1="882" x2="392.5" y2="898" stroke="#9a9a9a" stroke-width="1" />
<text x="541" y="893" font-family="Liberation Sans" font-size="10.5" font-weight="normal" font-style="normal" fill="#111" text-anchor="start" textLength="106" lengthAdjust="spacingAndGlyphs" stroke="#111" stroke-width="0.5" >SYNC 73 | TEI 205 | CC 5138</text>
<line x1="792.5" y1="882" x2="792.5" y2="898" stroke="#9a9a9a" stroke-width="1" />
<text x="916.5" y="893" font-family="Liberation Sans" font-size="10.5" font-weight="normal" font-style="normal" fill="#111" text-anchor="start" textLength="148" lengthAdjust="spacingAndGlyphs" stroke="#111" stroke-width="0.5" >Best signal: 9,0 dB (2025-04-22 04:08)</text>
<line x1="1189.5" y1="882" x2="1189.5" y2="898" stroke="#9a9a9a" stroke-width="1" />
<rect x="1196" y="887" width="2" height="2" fill="#a0a0a0" />
<rect x="1196" y="891" width="2" height="2" fill="#a0a0a0" />
<rect x="1192" y="891" width="2" height="2" fill="#a0a0a0" />
<rect x="1196" y="895" width="2" height="2" fill="#a0a0a0" />
<rect x="1192" y="895" width="2" height="2" fill="#a0a0a0" />
<rect x="1188" y="895" width="2" height="2" fill="#a0a0a0" />
<text x="297.5" y="11.0" font-family="Liberation Sans" font-size="12.5" font-weight="normal" font-style="normal" fill="#1a1a1a" text-anchor="start" textLength="201" lengthAdjust="spacingAndGlyphs" >PF Prodelin 450 cm/Lučenec-Slovakia</text>
<text x="297.5" y="29.8" font-family="Liberation Sans" font-size="12.5" font-weight="normal" font-style="normal" fill="#1a1a1a" text-anchor="start" textLength="202" lengthAdjust="spacingAndGlyphs" >AMOS 3 at 4,0°W_Middle East beam</text>
<text x="297.5" y="46.8" font-family="Liberation Sans" font-size="12.5" font-weight="normal" font-style="normal" fill="#1a1a1a" text-anchor="start" textLength="142" lengthAdjust="spacingAndGlyphs" >10 758 MHz-V : YES Israel</text>
<text x="297.5" y="64.5" font-family="Liberation Sans" font-size="12.5" font-weight="normal" font-style="normal" fill="#1a1a1a" text-anchor="start" textLength="137" lengthAdjust="spacingAndGlyphs" >Locked Uptime : 73:09:41</text>
<rect x="511" y="-20" width="720" height="104" fill="#000" opacity="0.5" filter="url(#blurA)"/>
<rect x="500" y="70" width="720" height="26" fill="#000" opacity="0.62" filter="url(#blurS)"/>
<path d="M511 0 L1200 0 L1200 83 L516 83 Q511 83 511 78 Z" fill="#000000"/>
<text x="543" y="4" font-family="Liberation Sans" font-size="11" font-weight="normal" font-style="normal" fill="#e6e6e6" text-anchor="start" textLength="65" lengthAdjust="spacingAndGlyphs" >Príkazový riadok</text>
<text x="670" y="5" font-family="Liberation Sans" font-size="12" font-weight="normal" font-style="normal" fill="#cfcfcf" text-anchor="start" >×</text>
<text x="700" y="5" font-family="Liberation Sans" font-size="13" font-weight="bold" font-style="normal" fill="#cfcfcf" text-anchor="start" >+</text>
<path d="M721 0 L725 3 L729 0" stroke="#cfcfcf" stroke-width="1" fill="none"/>
<text x="517.5" y="33" font-family="Liberation Mono" font-size="12.5" font-weight="normal" font-style="normal" fill="#b8b8b8" text-anchor="start" textLength="40.3" lengthAdjust="spacingAndGlyphs" >(c) M:</text>
<text x="517" y="66.3" font-family="Liberation Mono" font-size="12.5" font-weight="normal" font-style="normal" fill="#b8b8b8" text-anchor="start" textLength="659" lengthAdjust="spacingAndGlyphs" >C:\Users\Roman Dávid&gt;Signal Monitoring_PF 450_LC/SK_Amos 3-4,0°W_Middle east_10 758-V_21.4.2025+</text>
<rect x="554" y="6" width="124" height="38" fill="#ffffff" />
<rect x="554" y="6" width="124" height="18" fill="#f5d200" />
<rect x="554" y="24" width="124" height="7" fill="url(#gClock)" />
<rect x="554" y="32" width="124" height="1" fill="#f2f2f2" />
<rect x="554" y="34" width="124" height="1" fill="#f2f2f2" />
<rect x="554" y="36" width="124" height="1" fill="#f2f2f2" />
<rect x="554" y="38" width="124" height="1" fill="#f2f2f2" />
<rect x="554" y="40" width="124" height="1" fill="#f2f2f2" />
<rect x="554" y="42" width="124" height="1" fill="#f2f2f2" />
<text x="560.3" y="18.6" font-family="Liberation Sans" font-size="12.5" font-weight="bold" font-style="italic" fill="#111" text-anchor="start" textLength="113.5" lengthAdjust="spacingAndGlyphs" stroke="#111" stroke-width="0.35" >Berlin-Paris-Vienna-Roma</text>
<text x="558.5" y="40.3" font-family="Liberation Sans" font-size="11.5" font-weight="bold" font-style="normal" fill="#000" text-anchor="start" textLength="51.5" lengthAdjust="spacingAndGlyphs" stroke="#000" stroke-width="0.35" >Thu, Apr 24</text>
<text x="642.8" y="40.3" font-family="Liberation Sans" font-size="11.5" font-weight="bold" font-style="normal" fill="#000" text-anchor="start" textLength="22" lengthAdjust="spacingAndGlyphs" stroke="#000" stroke-width="0.35" >16:41</text>
<rect x="679" y="6" width="124" height="38" fill="#ffffff" />
<rect x="679" y="6" width="124" height="18" fill="#f01010" />
<rect x="679" y="24" width="124" height="7" fill="url(#gClock)" />
<rect x="679" y="32" width="124" height="1" fill="#f2f2f2" />
<rect x="679" y="34" width="124" height="1" fill="#f2f2f2" />
<rect x="679" y="36" width="124" height="1" fill="#f2f2f2" />
<rect x="679" y="38" width="124" height="1" fill="#f2f2f2" />
<rect x="679" y="40" width="124" height="1" fill="#f2f2f2" />
<rect x="679" y="42" width="124" height="1" fill="#f2f2f2" />
<text x="728" y="18.6" font-family="Liberation Sans" font-size="12.5" font-weight="bold" font-style="italic" fill="#111" text-anchor="start" textLength="31.5" lengthAdjust="spacingAndGlyphs" stroke="#111" stroke-width="0.35" >Dubai</text>
<text x="683.5" y="40.3" font-family="Liberation Sans" font-size="11.5" font-weight="bold" font-style="normal" fill="#000" text-anchor="start" textLength="51.5" lengthAdjust="spacingAndGlyphs" stroke="#000" stroke-width="0.35" >Thu, Apr 24</text>
<text x="766.8" y="40.3" font-family="Liberation Sans" font-size="11.5" font-weight="bold" font-style="normal" fill="#000" text-anchor="start" textLength="22.4" lengthAdjust="spacingAndGlyphs" stroke="#000" stroke-width="0.35" >18:41</text>
<text x="751.3" y="31.5" font-family="Liberation Sans" font-size="7.5" font-weight="bold" font-style="normal" fill="#000" text-anchor="middle" stroke="#000" stroke-width="0.2" >+2</text>
<rect x="803" y="6" width="124" height="38" fill="#ffffff" />
<rect x="803" y="6" width="124" height="18" fill="#1ec81e" />
<rect x="803" y="24" width="124" height="7" fill="url(#gClock)" />
<rect x="803" y="32" width="124" height="1" fill="#f2f2f2" />
<rect x="803" y="34" width="124" height="1" fill="#f2f2f2" />
<rect x="803" y="36" width="124" height="1" fill="#f2f2f2" />
<rect x="803" y="38" width="124" height="1" fill="#f2f2f2" />
<rect x="803" y="40" width="124" height="1" fill="#f2f2f2" />
<rect x="803" y="42" width="124" height="1" fill="#f2f2f2" />
<text x="842.7" y="18.6" font-family="Liberation Sans" font-size="12.5" font-weight="bold" font-style="italic" fill="#111" text-anchor="start" textLength="48" lengthAdjust="spacingAndGlyphs" stroke="#111" stroke-width="0.35" >Moscow</text>
<text x="807.5" y="40.3" font-family="Liberation Sans" font-size="11.5" font-weight="bold" font-style="normal" fill="#000" text-anchor="start" textLength="51.5" lengthAdjust="spacingAndGlyphs" stroke="#000" stroke-width="0.35" >Thu, Apr 24</text>
<text x="891.7" y="40.3" font-family="Liberation Sans" font-size="11.5" font-weight="bold" font-style="normal" fill="#000" text-anchor="start" textLength="21.6" lengthAdjust="spacingAndGlyphs" stroke="#000" stroke-width="0.35" >17:41</text>
<text x="875" y="31.5" font-family="Liberation Sans" font-size="7.5" font-weight="bold" font-style="normal" fill="#000" text-anchor="middle" stroke="#000" stroke-width="0.2" >+1</text>
<rect x="928" y="6" width="124" height="38" fill="#ffffff" />
<rect x="928" y="6" width="124" height="18" fill="#1c4cd0" />
<rect x="928" y="24" width="124" height="7" fill="url(#gClock)" />
<rect x="928" y="32" width="124" height="1" fill="#f2f2f2" />
<rect x="928" y="34" width="124" height="1" fill="#f2f2f2" />
<rect x="928" y="36" width="124" height="1" fill="#f2f2f2" />
<rect x="928" y="38" width="124" height="1" fill="#f2f2f2" />
<rect x="928" y="40" width="124" height="1" fill="#f2f2f2" />
<rect x="928" y="42" width="124" height="1" fill="#f2f2f2" />
<text x="956" y="18.6" font-family="Liberation Sans" font-size="12.5" font-weight="bold" font-style="italic" fill="#111" text-anchor="start" textLength="70.7" lengthAdjust="spacingAndGlyphs" stroke="#111" stroke-width="0.35" >London, Eng</text>
<text x="932.5" y="40.3" font-family="Liberation Sans" font-size="11.5" font-weight="bold" font-style="normal" fill="#000" text-anchor="start" textLength="51.5" lengthAdjust="spacingAndGlyphs" stroke="#000" stroke-width="0.35" >Thu, Apr 24</text>
<text x="1010" y="40.3" font-family="Liberation Sans" font-size="11.5" font-weight="bold" font-style="normal" fill="#000" text-anchor="start" textLength="36" lengthAdjust="spacingAndGlyphs" stroke="#000" stroke-width="0.35" >15:41:38</text>
<text x="1000.7" y="31.5" font-family="Liberation Sans" font-size="7.5" font-weight="bold" font-style="normal" fill="#000" text-anchor="middle" stroke="#000" stroke-width="0.2" >-1</text>
<text x="996" y="40.5" font-family="Liberation Sans" font-size="7" font-weight="bold" font-style="normal" fill="#000" text-anchor="middle" textLength="12.5" lengthAdjust="spacingAndGlyphs" >DST</text>
<rect x="1052" y="6" width="124" height="38" fill="#ffffff" />
<rect x="1052" y="6" width="124" height="18" fill="#1ec4c4" />
<rect x="1052" y="24" width="124" height="7" fill="url(#gClock)" />
<rect x="1052" y="32" width="124" height="1" fill="#f2f2f2" />
<rect x="1052" y="34" width="124" height="1" fill="#f2f2f2" />
<rect x="1052" y="36" width="124" height="1" fill="#f2f2f2" />
<rect x="1052" y="38" width="124" height="1" fill="#f2f2f2" />
<rect x="1052" y="40" width="124" height="1" fill="#f2f2f2" />
<rect x="1052" y="42" width="124" height="1" fill="#f2f2f2" />
<text x="1068" y="18.6" font-family="Liberation Sans" font-size="12.5" font-weight="bold" font-style="italic" fill="#111" text-anchor="start" textLength="94.7" lengthAdjust="spacingAndGlyphs" stroke="#111" stroke-width="0.35" >Jerusalem-Israel</text>
<text x="1056.5" y="40.3" font-family="Liberation Sans" font-size="11.5" font-weight="bold" font-style="normal" fill="#000" text-anchor="start" textLength="51.5" lengthAdjust="spacingAndGlyphs" stroke="#000" stroke-width="0.35" >Thu, Apr 24</text>
<text x="1140.7" y="40.3" font-family="Liberation Sans" font-size="11.5" font-weight="bold" font-style="normal" fill="#000" text-anchor="start" textLength="22" lengthAdjust="spacingAndGlyphs" stroke="#000" stroke-width="0.35" >17:41</text>
<text x="1124" y="31.5" font-family="Liberation Sans" font-size="7.5" font-weight="bold" font-style="normal" fill="#000" text-anchor="middle" stroke="#000" stroke-width="0.2" >+1</text>
<line x1="678.5" y1="6" x2="678.5" y2="44" stroke="#222" stroke-width="1" />
<line x1="803.0" y1="6" x2="803.0" y2="44" stroke="#222" stroke-width="1" />
<line x1="927.5" y1="6" x2="927.5" y2="44" stroke="#222" stroke-width="1" />
<line x1="1052.0" y1="6" x2="1052.0" y2="44" stroke="#222" stroke-width="1" />
<rect x="573" y="80" width="54" height="51.5" fill="#ffffff" />
<g fill="none" stroke="#2a2a8c" stroke-width="1.6"><path d="M583 123 L617.4 123"/><path d="M614.67 88.48 A23.5 23.5 0 1 0 583.01 123.03"/><path d="M623.61 104.95 A23.5 23.5 0 0 0 616.23 89.81"/><path d="M617.39 123.03 A23.5 23.5 0 0 0 623.69 107.82"/></g>
<g fill="none" stroke="#c42828" stroke-width="1.8"><path d="M612.3 96.2 Q615.6 100.5 616.6 107"/><path d="M615.4 93.6 Q619.6 99 620.2 107.2"/></g>
<g fill="none" stroke="#44448a" stroke-width="0.9"><ellipse cx="598.3" cy="104" rx="3.2" ry="17.5" transform="rotate(-21 598.3 104)"/><path d="M598 103.5 L610.5 103 L604 111"/><circle cx="590.3" cy="114.5" r="2.4"/><path d="M588 117 L585.5 122.5 M592 116.5 L595 122.5 M592.5 113 L599 108"/></g>
<text x="600.5" y="130.6" font-family="Liberation Serif" font-size="8" font-weight="bold" fill="#2a2a8c" stroke="#2a2a8c" stroke-width="0.25" text-anchor="middle" textLength="50" lengthAdjust="spacingAndGlyphs"><tspan fill="#c42828" stroke="#c42828">DX</tspan>SATCS.COM</text></svg></body></html>
